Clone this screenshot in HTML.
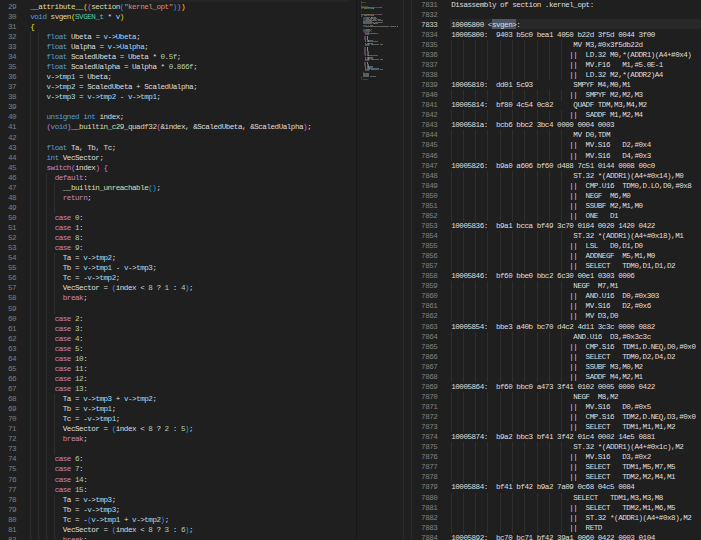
<!DOCTYPE html><html><head><meta charset="utf-8"><style>
*{margin:0;padding:0}
html,body{width:701px;height:540px;overflow:hidden;background:#1f1f1f}
body{position:relative;font-family:"Liberation Mono",monospace;font-size:7.600px;letter-spacing:-0.4850px;line-height:10.058px;color:#dedede}
.l{position:absolute;white-space:pre;height:10.058px}
.n{position:absolute;white-space:pre;text-align:right;width:40px;color:#808080;height:10.058px}
.g{position:absolute;width:1px;background:#2f2f2f}
i{font-style:normal}
.fn{color:#dcdcaa} .kw{color:#569cd6} .ctl{color:#c586c0} .ty{color:#4ec9b0} .var{color:#9cdcfe} .loc{color:#dedede}
.str{color:#ce9178} .num{color:#b5cea8} .b1{color:#ffd700} .b2{color:#da70d6} .b3{color:#179fff}
</style></head><body>
<div class="n" style="left:-23.80px;top:1.77px">29</div>
<div class="l" style="left:30.20px;top:1.77px"><i class="fn">__attribute__</i><i class="b1">(</i><i class="b2">(</i><i class="fn">section</i><i class="b3">(</i><i class="str">&quot;kernel_opt&quot;</i><i class="b3">)</i><i class="b2">)</i><i class="b1">)</i></div>
<div class="n" style="left:-23.80px;top:11.83px">30</div>
<div class="l" style="left:30.20px;top:11.83px"><i class="kw">void</i> <i class="fn">svgen</i><i class="b1">(</i><i class="ty">SVGEN_t</i> * <i class="var">v</i><i class="b1">)</i></div>
<div class="n" style="left:-23.80px;top:21.89px">31</div>
<div class="l" style="left:30.20px;top:21.89px"><i class="b1">{</i></div>
<div class="n" style="left:-23.80px;top:31.95px">32</div>
<div class="g" style="left:30px;top:31.95px;height:10.36px"></div>
<div class="g" style="left:38px;top:31.95px;height:10.36px"></div>
<div class="l" style="left:30.20px;top:31.95px">    <i class="kw">float</i> <i class="loc">Ubeta</i> = <i class="var">v</i>-&gt;<i class="var">Ubeta</i>;</div>
<div class="n" style="left:-23.80px;top:42.00px">33</div>
<div class="g" style="left:30px;top:42.00px;height:10.36px"></div>
<div class="g" style="left:38px;top:42.00px;height:10.36px"></div>
<div class="l" style="left:30.20px;top:42.00px">    <i class="kw">float</i> <i class="loc">Ualpha</i> = <i class="var">v</i>-&gt;<i class="var">Ualpha</i>;</div>
<div class="n" style="left:-23.80px;top:52.06px">34</div>
<div class="g" style="left:30px;top:52.06px;height:10.36px"></div>
<div class="g" style="left:38px;top:52.06px;height:10.36px"></div>
<div class="l" style="left:30.20px;top:52.06px">    <i class="kw">float</i> <i class="loc">ScaledUbeta</i> = <i class="loc">Ubeta</i> * <i class="num">0.5f</i>;</div>
<div class="n" style="left:-23.80px;top:62.12px">35</div>
<div class="g" style="left:30px;top:62.12px;height:10.36px"></div>
<div class="g" style="left:38px;top:62.12px;height:10.36px"></div>
<div class="l" style="left:30.20px;top:62.12px">    <i class="kw">float</i> <i class="loc">ScaledUalpha</i> = <i class="loc">Ualpha</i> * <i class="num">0.866f</i>;</div>
<div class="n" style="left:-23.80px;top:72.18px">36</div>
<div class="g" style="left:30px;top:72.18px;height:10.36px"></div>
<div class="g" style="left:38px;top:72.18px;height:10.36px"></div>
<div class="l" style="left:30.20px;top:72.18px">    <i class="var">v</i>-&gt;<i class="var">tmp1</i> = <i class="loc">Ubeta</i>;</div>
<div class="n" style="left:-23.80px;top:82.23px">37</div>
<div class="g" style="left:30px;top:82.23px;height:10.36px"></div>
<div class="g" style="left:38px;top:82.23px;height:10.36px"></div>
<div class="l" style="left:30.20px;top:82.23px">    <i class="var">v</i>-&gt;<i class="var">tmp2</i> = <i class="loc">ScaledUbeta</i> + <i class="loc">ScaledUalpha</i>;</div>
<div class="n" style="left:-23.80px;top:92.29px">38</div>
<div class="g" style="left:30px;top:92.29px;height:10.36px"></div>
<div class="g" style="left:38px;top:92.29px;height:10.36px"></div>
<div class="l" style="left:30.20px;top:92.29px">    <i class="var">v</i>-&gt;<i class="var">tmp3</i> = <i class="var">v</i>-&gt;<i class="var">tmp2</i> - <i class="var">v</i>-&gt;<i class="var">tmp1</i>;</div>
<div class="n" style="left:-23.80px;top:102.35px">39</div>
<div class="g" style="left:30px;top:102.35px;height:10.36px"></div>
<div class="g" style="left:38px;top:102.35px;height:10.36px"></div>
<div class="n" style="left:-23.80px;top:112.41px">40</div>
<div class="g" style="left:30px;top:112.41px;height:10.36px"></div>
<div class="g" style="left:38px;top:112.41px;height:10.36px"></div>
<div class="l" style="left:30.20px;top:112.41px">    <i class="kw">unsigned</i> <i class="kw">int</i> <i class="loc">index</i>;</div>
<div class="n" style="left:-23.80px;top:122.47px">41</div>
<div class="g" style="left:30px;top:122.47px;height:10.36px"></div>
<div class="g" style="left:38px;top:122.47px;height:10.36px"></div>
<div class="l" style="left:30.20px;top:122.47px">    <i class="b2">(</i><i class="kw">void</i><i class="b2">)</i><i class="fn">__builtin_c29_quadf32</i><i class="b2">(</i>&amp;<i class="loc">index</i>, &amp;<i class="loc">ScaledUbeta</i>, &amp;<i class="loc">ScaledUalpha</i><i class="b2">)</i>;</div>
<div class="n" style="left:-23.80px;top:132.52px">42</div>
<div class="g" style="left:30px;top:132.52px;height:10.36px"></div>
<div class="g" style="left:38px;top:132.52px;height:10.36px"></div>
<div class="n" style="left:-23.80px;top:142.58px">43</div>
<div class="g" style="left:30px;top:142.58px;height:10.36px"></div>
<div class="g" style="left:38px;top:142.58px;height:10.36px"></div>
<div class="l" style="left:30.20px;top:142.58px">    <i class="kw">float</i> <i class="loc">Ta</i>, <i class="loc">Tb</i>, <i class="loc">Tc</i>;</div>
<div class="n" style="left:-23.80px;top:152.64px">44</div>
<div class="g" style="left:30px;top:152.64px;height:10.36px"></div>
<div class="g" style="left:38px;top:152.64px;height:10.36px"></div>
<div class="l" style="left:30.20px;top:152.64px">    <i class="kw">int</i> <i class="loc">VecSector</i>;</div>
<div class="n" style="left:-23.80px;top:162.70px">45</div>
<div class="g" style="left:30px;top:162.70px;height:10.36px"></div>
<div class="g" style="left:38px;top:162.70px;height:10.36px"></div>
<div class="l" style="left:30.20px;top:162.70px">    <i class="ctl">switch</i><i class="b2">(</i><i class="loc">index</i><i class="b2">)</i> <i class="b2">{</i></div>
<div class="n" style="left:-23.80px;top:172.76px">46</div>
<div class="g" style="left:30px;top:172.76px;height:10.36px"></div>
<div class="g" style="left:38px;top:172.76px;height:10.36px"></div>
<div class="g" style="left:46px;top:172.76px;height:10.36px"></div>
<div class="l" style="left:30.20px;top:172.76px">      <i class="ctl">default</i>:</div>
<div class="n" style="left:-23.80px;top:182.81px">47</div>
<div class="g" style="left:30px;top:182.81px;height:10.36px"></div>
<div class="g" style="left:38px;top:182.81px;height:10.36px"></div>
<div class="g" style="left:46px;top:182.81px;height:10.36px"></div>
<div class="g" style="left:54px;top:182.81px;height:10.36px"></div>
<div class="l" style="left:30.20px;top:182.81px">        <i class="fn">__builtin_unreachable</i><i class="b3">()</i>;</div>
<div class="n" style="left:-23.80px;top:192.87px">48</div>
<div class="g" style="left:30px;top:192.87px;height:10.36px"></div>
<div class="g" style="left:38px;top:192.87px;height:10.36px"></div>
<div class="g" style="left:46px;top:192.87px;height:10.36px"></div>
<div class="g" style="left:54px;top:192.87px;height:10.36px"></div>
<div class="l" style="left:30.20px;top:192.87px">        <i class="ctl">return</i>;</div>
<div class="n" style="left:-23.80px;top:202.93px">49</div>
<div class="g" style="left:30px;top:202.93px;height:10.36px"></div>
<div class="g" style="left:38px;top:202.93px;height:10.36px"></div>
<div class="g" style="left:46px;top:202.93px;height:10.36px"></div>
<div class="g" style="left:54px;top:202.93px;height:10.36px"></div>
<div class="n" style="left:-23.80px;top:212.99px">50</div>
<div class="g" style="left:30px;top:212.99px;height:10.36px"></div>
<div class="g" style="left:38px;top:212.99px;height:10.36px"></div>
<div class="g" style="left:46px;top:212.99px;height:10.36px"></div>
<div class="l" style="left:30.20px;top:212.99px">      <i class="ctl">case</i> <i class="num">0</i>:</div>
<div class="n" style="left:-23.80px;top:223.05px">51</div>
<div class="g" style="left:30px;top:223.05px;height:10.36px"></div>
<div class="g" style="left:38px;top:223.05px;height:10.36px"></div>
<div class="g" style="left:46px;top:223.05px;height:10.36px"></div>
<div class="l" style="left:30.20px;top:223.05px">      <i class="ctl">case</i> <i class="num">1</i>:</div>
<div class="n" style="left:-23.80px;top:233.10px">52</div>
<div class="g" style="left:30px;top:233.10px;height:10.36px"></div>
<div class="g" style="left:38px;top:233.10px;height:10.36px"></div>
<div class="g" style="left:46px;top:233.10px;height:10.36px"></div>
<div class="l" style="left:30.20px;top:233.10px">      <i class="ctl">case</i> <i class="num">8</i>:</div>
<div class="n" style="left:-23.80px;top:243.16px">53</div>
<div class="g" style="left:30px;top:243.16px;height:10.36px"></div>
<div class="g" style="left:38px;top:243.16px;height:10.36px"></div>
<div class="g" style="left:46px;top:243.16px;height:10.36px"></div>
<div class="l" style="left:30.20px;top:243.16px">      <i class="ctl">case</i> <i class="num">9</i>:</div>
<div class="n" style="left:-23.80px;top:253.22px">54</div>
<div class="g" style="left:30px;top:253.22px;height:10.36px"></div>
<div class="g" style="left:38px;top:253.22px;height:10.36px"></div>
<div class="g" style="left:46px;top:253.22px;height:10.36px"></div>
<div class="g" style="left:54px;top:253.22px;height:10.36px"></div>
<div class="l" style="left:30.20px;top:253.22px">        <i class="loc">Ta</i> = <i class="var">v</i>-&gt;<i class="var">tmp2</i>;</div>
<div class="n" style="left:-23.80px;top:263.28px">55</div>
<div class="g" style="left:30px;top:263.28px;height:10.36px"></div>
<div class="g" style="left:38px;top:263.28px;height:10.36px"></div>
<div class="g" style="left:46px;top:263.28px;height:10.36px"></div>
<div class="g" style="left:54px;top:263.28px;height:10.36px"></div>
<div class="l" style="left:30.20px;top:263.28px">        <i class="loc">Tb</i> = <i class="var">v</i>-&gt;<i class="var">tmp1</i> - <i class="var">v</i>-&gt;<i class="var">tmp3</i>;</div>
<div class="n" style="left:-23.80px;top:273.34px">56</div>
<div class="g" style="left:30px;top:273.34px;height:10.36px"></div>
<div class="g" style="left:38px;top:273.34px;height:10.36px"></div>
<div class="g" style="left:46px;top:273.34px;height:10.36px"></div>
<div class="g" style="left:54px;top:273.34px;height:10.36px"></div>
<div class="l" style="left:30.20px;top:273.34px">        <i class="loc">Tc</i> = -<i class="var">v</i>-&gt;<i class="var">tmp2</i>;</div>
<div class="n" style="left:-23.80px;top:283.40px">57</div>
<div class="g" style="left:30px;top:283.40px;height:10.36px"></div>
<div class="g" style="left:38px;top:283.40px;height:10.36px"></div>
<div class="g" style="left:46px;top:283.40px;height:10.36px"></div>
<div class="g" style="left:54px;top:283.40px;height:10.36px"></div>
<div class="l" style="left:30.20px;top:283.40px">        <i class="loc">VecSector</i> = <i class="b3">(</i><i class="loc">index</i> &lt; <i class="num">8</i> ? <i class="num">1</i> : <i class="num">4</i><i class="b3">)</i>;</div>
<div class="n" style="left:-23.80px;top:293.45px">58</div>
<div class="g" style="left:30px;top:293.45px;height:10.36px"></div>
<div class="g" style="left:38px;top:293.45px;height:10.36px"></div>
<div class="g" style="left:46px;top:293.45px;height:10.36px"></div>
<div class="g" style="left:54px;top:293.45px;height:10.36px"></div>
<div class="l" style="left:30.20px;top:293.45px">        <i class="ctl">break</i>;</div>
<div class="n" style="left:-23.80px;top:303.51px">59</div>
<div class="g" style="left:30px;top:303.51px;height:10.36px"></div>
<div class="g" style="left:38px;top:303.51px;height:10.36px"></div>
<div class="g" style="left:46px;top:303.51px;height:10.36px"></div>
<div class="g" style="left:54px;top:303.51px;height:10.36px"></div>
<div class="n" style="left:-23.80px;top:313.57px">60</div>
<div class="g" style="left:30px;top:313.57px;height:10.36px"></div>
<div class="g" style="left:38px;top:313.57px;height:10.36px"></div>
<div class="g" style="left:46px;top:313.57px;height:10.36px"></div>
<div class="l" style="left:30.20px;top:313.57px">      <i class="ctl">case</i> <i class="num">2</i>:</div>
<div class="n" style="left:-23.80px;top:323.63px">61</div>
<div class="g" style="left:30px;top:323.63px;height:10.36px"></div>
<div class="g" style="left:38px;top:323.63px;height:10.36px"></div>
<div class="g" style="left:46px;top:323.63px;height:10.36px"></div>
<div class="l" style="left:30.20px;top:323.63px">      <i class="ctl">case</i> <i class="num">3</i>:</div>
<div class="n" style="left:-23.80px;top:333.69px">62</div>
<div class="g" style="left:30px;top:333.69px;height:10.36px"></div>
<div class="g" style="left:38px;top:333.69px;height:10.36px"></div>
<div class="g" style="left:46px;top:333.69px;height:10.36px"></div>
<div class="l" style="left:30.20px;top:333.69px">      <i class="ctl">case</i> <i class="num">4</i>:</div>
<div class="n" style="left:-23.80px;top:343.74px">63</div>
<div class="g" style="left:30px;top:343.74px;height:10.36px"></div>
<div class="g" style="left:38px;top:343.74px;height:10.36px"></div>
<div class="g" style="left:46px;top:343.74px;height:10.36px"></div>
<div class="l" style="left:30.20px;top:343.74px">      <i class="ctl">case</i> <i class="num">5</i>:</div>
<div class="n" style="left:-23.80px;top:353.80px">64</div>
<div class="g" style="left:30px;top:353.80px;height:10.36px"></div>
<div class="g" style="left:38px;top:353.80px;height:10.36px"></div>
<div class="g" style="left:46px;top:353.80px;height:10.36px"></div>
<div class="l" style="left:30.20px;top:353.80px">      <i class="ctl">case</i> <i class="num">10</i>:</div>
<div class="n" style="left:-23.80px;top:363.86px">65</div>
<div class="g" style="left:30px;top:363.86px;height:10.36px"></div>
<div class="g" style="left:38px;top:363.86px;height:10.36px"></div>
<div class="g" style="left:46px;top:363.86px;height:10.36px"></div>
<div class="l" style="left:30.20px;top:363.86px">      <i class="ctl">case</i> <i class="num">11</i>:</div>
<div class="n" style="left:-23.80px;top:373.92px">66</div>
<div class="g" style="left:30px;top:373.92px;height:10.36px"></div>
<div class="g" style="left:38px;top:373.92px;height:10.36px"></div>
<div class="g" style="left:46px;top:373.92px;height:10.36px"></div>
<div class="l" style="left:30.20px;top:373.92px">      <i class="ctl">case</i> <i class="num">12</i>:</div>
<div class="n" style="left:-23.80px;top:383.98px">67</div>
<div class="g" style="left:30px;top:383.98px;height:10.36px"></div>
<div class="g" style="left:38px;top:383.98px;height:10.36px"></div>
<div class="g" style="left:46px;top:383.98px;height:10.36px"></div>
<div class="l" style="left:30.20px;top:383.98px">      <i class="ctl">case</i> <i class="num">13</i>:</div>
<div class="n" style="left:-23.80px;top:394.03px">68</div>
<div class="g" style="left:30px;top:394.03px;height:10.36px"></div>
<div class="g" style="left:38px;top:394.03px;height:10.36px"></div>
<div class="g" style="left:46px;top:394.03px;height:10.36px"></div>
<div class="g" style="left:54px;top:394.03px;height:10.36px"></div>
<div class="l" style="left:30.20px;top:394.03px">        <i class="loc">Ta</i> = <i class="var">v</i>-&gt;<i class="var">tmp3</i> + <i class="var">v</i>-&gt;<i class="var">tmp2</i>;</div>
<div class="n" style="left:-23.80px;top:404.09px">69</div>
<div class="g" style="left:30px;top:404.09px;height:10.36px"></div>
<div class="g" style="left:38px;top:404.09px;height:10.36px"></div>
<div class="g" style="left:46px;top:404.09px;height:10.36px"></div>
<div class="g" style="left:54px;top:404.09px;height:10.36px"></div>
<div class="l" style="left:30.20px;top:404.09px">        <i class="loc">Tb</i> = <i class="var">v</i>-&gt;<i class="var">tmp1</i>;</div>
<div class="n" style="left:-23.80px;top:414.15px">70</div>
<div class="g" style="left:30px;top:414.15px;height:10.36px"></div>
<div class="g" style="left:38px;top:414.15px;height:10.36px"></div>
<div class="g" style="left:46px;top:414.15px;height:10.36px"></div>
<div class="g" style="left:54px;top:414.15px;height:10.36px"></div>
<div class="l" style="left:30.20px;top:414.15px">        <i class="loc">Tc</i> = -<i class="var">v</i>-&gt;<i class="var">tmp1</i>;</div>
<div class="n" style="left:-23.80px;top:424.21px">71</div>
<div class="g" style="left:30px;top:424.21px;height:10.36px"></div>
<div class="g" style="left:38px;top:424.21px;height:10.36px"></div>
<div class="g" style="left:46px;top:424.21px;height:10.36px"></div>
<div class="g" style="left:54px;top:424.21px;height:10.36px"></div>
<div class="l" style="left:30.20px;top:424.21px">        <i class="loc">VecSector</i> = <i class="b3">(</i><i class="loc">index</i> &lt; <i class="num">8</i> ? <i class="num">2</i> : <i class="num">5</i><i class="b3">)</i>;</div>
<div class="n" style="left:-23.80px;top:434.26px">72</div>
<div class="g" style="left:30px;top:434.26px;height:10.36px"></div>
<div class="g" style="left:38px;top:434.26px;height:10.36px"></div>
<div class="g" style="left:46px;top:434.26px;height:10.36px"></div>
<div class="g" style="left:54px;top:434.26px;height:10.36px"></div>
<div class="l" style="left:30.20px;top:434.26px">        <i class="ctl">break</i>;</div>
<div class="n" style="left:-23.80px;top:444.32px">73</div>
<div class="g" style="left:30px;top:444.32px;height:10.36px"></div>
<div class="g" style="left:38px;top:444.32px;height:10.36px"></div>
<div class="g" style="left:46px;top:444.32px;height:10.36px"></div>
<div class="g" style="left:54px;top:444.32px;height:10.36px"></div>
<div class="n" style="left:-23.80px;top:454.38px">74</div>
<div class="g" style="left:30px;top:454.38px;height:10.36px"></div>
<div class="g" style="left:38px;top:454.38px;height:10.36px"></div>
<div class="g" style="left:46px;top:454.38px;height:10.36px"></div>
<div class="l" style="left:30.20px;top:454.38px">      <i class="ctl">case</i> <i class="num">6</i>:</div>
<div class="n" style="left:-23.80px;top:464.44px">75</div>
<div class="g" style="left:30px;top:464.44px;height:10.36px"></div>
<div class="g" style="left:38px;top:464.44px;height:10.36px"></div>
<div class="g" style="left:46px;top:464.44px;height:10.36px"></div>
<div class="l" style="left:30.20px;top:464.44px">      <i class="ctl">case</i> <i class="num">7</i>:</div>
<div class="n" style="left:-23.80px;top:474.50px">76</div>
<div class="g" style="left:30px;top:474.50px;height:10.36px"></div>
<div class="g" style="left:38px;top:474.50px;height:10.36px"></div>
<div class="g" style="left:46px;top:474.50px;height:10.36px"></div>
<div class="l" style="left:30.20px;top:474.50px">      <i class="ctl">case</i> <i class="num">14</i>:</div>
<div class="n" style="left:-23.80px;top:484.56px">77</div>
<div class="g" style="left:30px;top:484.56px;height:10.36px"></div>
<div class="g" style="left:38px;top:484.56px;height:10.36px"></div>
<div class="g" style="left:46px;top:484.56px;height:10.36px"></div>
<div class="l" style="left:30.20px;top:484.56px">      <i class="ctl">case</i> <i class="num">15</i>:</div>
<div class="n" style="left:-23.80px;top:494.61px">78</div>
<div class="g" style="left:30px;top:494.61px;height:10.36px"></div>
<div class="g" style="left:38px;top:494.61px;height:10.36px"></div>
<div class="g" style="left:46px;top:494.61px;height:10.36px"></div>
<div class="g" style="left:54px;top:494.61px;height:10.36px"></div>
<div class="l" style="left:30.20px;top:494.61px">        <i class="loc">Ta</i> = <i class="var">v</i>-&gt;<i class="var">tmp3</i>;</div>
<div class="n" style="left:-23.80px;top:504.67px">79</div>
<div class="g" style="left:30px;top:504.67px;height:10.36px"></div>
<div class="g" style="left:38px;top:504.67px;height:10.36px"></div>
<div class="g" style="left:46px;top:504.67px;height:10.36px"></div>
<div class="g" style="left:54px;top:504.67px;height:10.36px"></div>
<div class="l" style="left:30.20px;top:504.67px">        <i class="loc">Tb</i> = -<i class="var">v</i>-&gt;<i class="var">tmp3</i>;</div>
<div class="n" style="left:-23.80px;top:514.73px">80</div>
<div class="g" style="left:30px;top:514.73px;height:10.36px"></div>
<div class="g" style="left:38px;top:514.73px;height:10.36px"></div>
<div class="g" style="left:46px;top:514.73px;height:10.36px"></div>
<div class="g" style="left:54px;top:514.73px;height:10.36px"></div>
<div class="l" style="left:30.20px;top:514.73px">        <i class="loc">Tc</i> = -<i class="b3">(</i><i class="var">v</i>-&gt;<i class="var">tmp1</i> + <i class="var">v</i>-&gt;<i class="var">tmp2</i><i class="b3">)</i>;</div>
<div class="n" style="left:-23.80px;top:524.79px">81</div>
<div class="g" style="left:30px;top:524.79px;height:10.36px"></div>
<div class="g" style="left:38px;top:524.79px;height:10.36px"></div>
<div class="g" style="left:46px;top:524.79px;height:10.36px"></div>
<div class="g" style="left:54px;top:524.79px;height:10.36px"></div>
<div class="l" style="left:30.20px;top:524.79px">        <i class="loc">VecSector</i> = <i class="b3">(</i><i class="loc">index</i> &lt; <i class="num">8</i> ? <i class="num">3</i> : <i class="num">6</i><i class="b3">)</i>;</div>
<div class="n" style="left:-23.80px;top:534.84px">82</div>
<div class="g" style="left:30px;top:534.84px;height:10.36px"></div>
<div class="g" style="left:38px;top:534.84px;height:10.36px"></div>
<div class="g" style="left:46px;top:534.84px;height:10.36px"></div>
<div class="g" style="left:54px;top:534.84px;height:10.36px"></div>
<div class="l" style="left:30.20px;top:534.84px">        <i class="ctl">break</i>;</div>
<div class="n" style="left:-23.80px;top:544.90px">83</div>
<div class="g" style="left:30px;top:544.90px;height:10.36px"></div>
<div class="g" style="left:38px;top:544.90px;height:10.36px"></div>
<div class="g" style="left:46px;top:544.90px;height:10.36px"></div>
<div class="g" style="left:54px;top:544.90px;height:10.36px"></div>
<div style="position:absolute;left:361.00px;top:0.60px;width:0.53px;height:0.85px;background:#6a9955;opacity:.35"></div>
<div style="position:absolute;left:361.00px;top:1.68px;width:0.53px;height:0.85px;background:#6a9955;opacity:.35"></div>
<div style="position:absolute;left:362.06px;top:1.68px;width:4.24px;height:0.85px;background:#6a9955;opacity:.35"></div>
<div style="position:absolute;left:361.00px;top:2.75px;width:0.53px;height:0.85px;background:#6a9955;opacity:.35"></div>
<div style="position:absolute;left:361.00px;top:4.90px;width:0.53px;height:0.85px;background:#6a9955;opacity:.35"></div>
<div style="position:absolute;left:361.00px;top:5.98px;width:0.53px;height:0.85px;background:#6a9955;opacity:.35"></div>
<div style="position:absolute;left:362.06px;top:5.98px;width:5.83px;height:0.85px;background:#6a9955;opacity:.35"></div>
<div style="position:absolute;left:361.00px;top:7.05px;width:6.89px;height:0.85px;background:#dcdcaa;opacity:.35"></div>
<div style="position:absolute;left:367.89px;top:7.05px;width:0.53px;height:0.85px;background:#ffd700;opacity:.35"></div>
<div style="position:absolute;left:368.42px;top:7.05px;width:0.53px;height:0.85px;background:#da70d6;opacity:.35"></div>
<div style="position:absolute;left:368.95px;top:7.05px;width:3.71px;height:0.85px;background:#dcdcaa;opacity:.35"></div>
<div style="position:absolute;left:372.66px;top:7.05px;width:0.53px;height:0.85px;background:#179fff;opacity:.35"></div>
<div style="position:absolute;left:373.19px;top:7.05px;width:6.36px;height:0.85px;background:#ce9178;opacity:.35"></div>
<div style="position:absolute;left:379.55px;top:7.05px;width:0.53px;height:0.85px;background:#179fff;opacity:.35"></div>
<div style="position:absolute;left:380.08px;top:7.05px;width:0.53px;height:0.85px;background:#da70d6;opacity:.35"></div>
<div style="position:absolute;left:380.61px;top:7.05px;width:0.53px;height:0.85px;background:#ffd700;opacity:.35"></div>
<div style="position:absolute;left:361.00px;top:8.12px;width:2.12px;height:0.85px;background:#569cd6;opacity:.35"></div>
<div style="position:absolute;left:363.65px;top:8.12px;width:2.65px;height:0.85px;background:#dcdcaa;opacity:.35"></div>
<div style="position:absolute;left:366.30px;top:8.12px;width:0.53px;height:0.85px;background:#ffd700;opacity:.35"></div>
<div style="position:absolute;left:366.83px;top:8.12px;width:3.71px;height:0.85px;background:#4ec9b0;opacity:.35"></div>
<div style="position:absolute;left:371.07px;top:8.12px;width:0.53px;height:0.85px;background:#d4d4d4;opacity:.35"></div>
<div style="position:absolute;left:372.13px;top:8.12px;width:0.53px;height:0.85px;background:#9cdcfe;opacity:.35"></div>
<div style="position:absolute;left:372.66px;top:8.12px;width:0.53px;height:0.85px;background:#ffd700;opacity:.35"></div>
<div style="position:absolute;left:373.19px;top:8.12px;width:0.53px;height:0.85px;background:#d4d4d4;opacity:.35"></div>
<div style="position:absolute;left:361.00px;top:11.35px;width:1.06px;height:0.85px;background:#6a9955;opacity:.35"></div>
<div style="position:absolute;left:361.00px;top:13.50px;width:6.89px;height:0.85px;background:#dcdcaa;opacity:.35"></div>
<div style="position:absolute;left:367.89px;top:13.50px;width:0.53px;height:0.85px;background:#ffd700;opacity:.35"></div>
<div style="position:absolute;left:368.42px;top:13.50px;width:0.53px;height:0.85px;background:#da70d6;opacity:.35"></div>
<div style="position:absolute;left:368.95px;top:13.50px;width:3.71px;height:0.85px;background:#dcdcaa;opacity:.35"></div>
<div style="position:absolute;left:372.66px;top:13.50px;width:0.53px;height:0.85px;background:#179fff;opacity:.35"></div>
<div style="position:absolute;left:373.19px;top:13.50px;width:6.36px;height:0.85px;background:#ce9178;opacity:.35"></div>
<div style="position:absolute;left:379.55px;top:13.50px;width:0.53px;height:0.85px;background:#179fff;opacity:.35"></div>
<div style="position:absolute;left:380.08px;top:13.50px;width:0.53px;height:0.85px;background:#da70d6;opacity:.35"></div>
<div style="position:absolute;left:380.61px;top:13.50px;width:0.53px;height:0.85px;background:#ffd700;opacity:.35"></div>
<div style="position:absolute;left:361.00px;top:14.57px;width:2.12px;height:0.85px;background:#569cd6;opacity:.35"></div>
<div style="position:absolute;left:363.65px;top:14.57px;width:2.65px;height:0.85px;background:#dcdcaa;opacity:.35"></div>
<div style="position:absolute;left:366.30px;top:14.57px;width:0.53px;height:0.85px;background:#ffd700;opacity:.35"></div>
<div style="position:absolute;left:366.83px;top:14.57px;width:3.71px;height:0.85px;background:#4ec9b0;opacity:.35"></div>
<div style="position:absolute;left:371.07px;top:14.57px;width:0.53px;height:0.85px;background:#d4d4d4;opacity:.35"></div>
<div style="position:absolute;left:372.13px;top:14.57px;width:0.53px;height:0.85px;background:#9cdcfe;opacity:.35"></div>
<div style="position:absolute;left:372.66px;top:14.57px;width:0.53px;height:0.85px;background:#ffd700;opacity:.35"></div>
<div style="position:absolute;left:361.00px;top:15.65px;width:0.53px;height:0.85px;background:#ffd700;opacity:.35"></div>
<div style="position:absolute;left:363.12px;top:16.73px;width:2.65px;height:0.85px;background:#569cd6;opacity:.35"></div>
<div style="position:absolute;left:366.30px;top:16.73px;width:2.65px;height:0.85px;background:#d4d4d4;opacity:.35"></div>
<div style="position:absolute;left:369.48px;top:16.73px;width:0.53px;height:0.85px;background:#d4d4d4;opacity:.35"></div>
<div style="position:absolute;left:370.54px;top:16.73px;width:0.53px;height:0.85px;background:#9cdcfe;opacity:.35"></div>
<div style="position:absolute;left:371.07px;top:16.73px;width:1.06px;height:0.85px;background:#d4d4d4;opacity:.35"></div>
<div style="position:absolute;left:372.13px;top:16.73px;width:2.65px;height:0.85px;background:#9cdcfe;opacity:.35"></div>
<div style="position:absolute;left:374.78px;top:16.73px;width:0.53px;height:0.85px;background:#d4d4d4;opacity:.35"></div>
<div style="position:absolute;left:363.12px;top:17.80px;width:2.65px;height:0.85px;background:#569cd6;opacity:.35"></div>
<div style="position:absolute;left:366.30px;top:17.80px;width:3.18px;height:0.85px;background:#d4d4d4;opacity:.35"></div>
<div style="position:absolute;left:370.01px;top:17.80px;width:0.53px;height:0.85px;background:#d4d4d4;opacity:.35"></div>
<div style="position:absolute;left:371.07px;top:17.80px;width:0.53px;height:0.85px;background:#9cdcfe;opacity:.35"></div>
<div style="position:absolute;left:371.60px;top:17.80px;width:1.06px;height:0.85px;background:#d4d4d4;opacity:.35"></div>
<div style="position:absolute;left:372.66px;top:17.80px;width:3.18px;height:0.85px;background:#9cdcfe;opacity:.35"></div>
<div style="position:absolute;left:375.84px;top:17.80px;width:0.53px;height:0.85px;background:#d4d4d4;opacity:.35"></div>
<div style="position:absolute;left:363.12px;top:18.88px;width:2.65px;height:0.85px;background:#569cd6;opacity:.35"></div>
<div style="position:absolute;left:366.30px;top:18.88px;width:5.83px;height:0.85px;background:#d4d4d4;opacity:.35"></div>
<div style="position:absolute;left:372.66px;top:18.88px;width:0.53px;height:0.85px;background:#d4d4d4;opacity:.35"></div>
<div style="position:absolute;left:373.72px;top:18.88px;width:2.65px;height:0.85px;background:#d4d4d4;opacity:.35"></div>
<div style="position:absolute;left:376.90px;top:18.88px;width:0.53px;height:0.85px;background:#d4d4d4;opacity:.35"></div>
<div style="position:absolute;left:377.96px;top:18.88px;width:2.12px;height:0.85px;background:#b5cea8;opacity:.35"></div>
<div style="position:absolute;left:380.08px;top:18.88px;width:0.53px;height:0.85px;background:#d4d4d4;opacity:.35"></div>
<div style="position:absolute;left:363.12px;top:19.95px;width:2.65px;height:0.85px;background:#569cd6;opacity:.35"></div>
<div style="position:absolute;left:366.30px;top:19.95px;width:6.36px;height:0.85px;background:#d4d4d4;opacity:.35"></div>
<div style="position:absolute;left:373.19px;top:19.95px;width:0.53px;height:0.85px;background:#d4d4d4;opacity:.35"></div>
<div style="position:absolute;left:374.25px;top:19.95px;width:3.18px;height:0.85px;background:#d4d4d4;opacity:.35"></div>
<div style="position:absolute;left:377.96px;top:19.95px;width:0.53px;height:0.85px;background:#d4d4d4;opacity:.35"></div>
<div style="position:absolute;left:379.02px;top:19.95px;width:3.18px;height:0.85px;background:#b5cea8;opacity:.35"></div>
<div style="position:absolute;left:382.20px;top:19.95px;width:0.53px;height:0.85px;background:#d4d4d4;opacity:.35"></div>
<div style="position:absolute;left:363.12px;top:21.02px;width:0.53px;height:0.85px;background:#9cdcfe;opacity:.35"></div>
<div style="position:absolute;left:363.65px;top:21.02px;width:1.06px;height:0.85px;background:#d4d4d4;opacity:.35"></div>
<div style="position:absolute;left:364.71px;top:21.02px;width:2.12px;height:0.85px;background:#9cdcfe;opacity:.35"></div>
<div style="position:absolute;left:367.36px;top:21.02px;width:0.53px;height:0.85px;background:#d4d4d4;opacity:.35"></div>
<div style="position:absolute;left:368.42px;top:21.02px;width:3.18px;height:0.85px;background:#d4d4d4;opacity:.35"></div>
<div style="position:absolute;left:363.12px;top:22.10px;width:0.53px;height:0.85px;background:#9cdcfe;opacity:.35"></div>
<div style="position:absolute;left:363.65px;top:22.10px;width:1.06px;height:0.85px;background:#d4d4d4;opacity:.35"></div>
<div style="position:absolute;left:364.71px;top:22.10px;width:2.12px;height:0.85px;background:#9cdcfe;opacity:.35"></div>
<div style="position:absolute;left:367.36px;top:22.10px;width:0.53px;height:0.85px;background:#d4d4d4;opacity:.35"></div>
<div style="position:absolute;left:368.42px;top:22.10px;width:5.83px;height:0.85px;background:#d4d4d4;opacity:.35"></div>
<div style="position:absolute;left:374.78px;top:22.10px;width:0.53px;height:0.85px;background:#d4d4d4;opacity:.35"></div>
<div style="position:absolute;left:375.84px;top:22.10px;width:6.89px;height:0.85px;background:#d4d4d4;opacity:.35"></div>
<div style="position:absolute;left:363.12px;top:23.17px;width:0.53px;height:0.85px;background:#9cdcfe;opacity:.35"></div>
<div style="position:absolute;left:363.65px;top:23.17px;width:1.06px;height:0.85px;background:#d4d4d4;opacity:.35"></div>
<div style="position:absolute;left:364.71px;top:23.17px;width:2.12px;height:0.85px;background:#9cdcfe;opacity:.35"></div>
<div style="position:absolute;left:367.36px;top:23.17px;width:0.53px;height:0.85px;background:#d4d4d4;opacity:.35"></div>
<div style="position:absolute;left:368.42px;top:23.17px;width:0.53px;height:0.85px;background:#9cdcfe;opacity:.35"></div>
<div style="position:absolute;left:368.95px;top:23.17px;width:1.06px;height:0.85px;background:#d4d4d4;opacity:.35"></div>
<div style="position:absolute;left:370.01px;top:23.17px;width:2.12px;height:0.85px;background:#9cdcfe;opacity:.35"></div>
<div style="position:absolute;left:372.66px;top:23.17px;width:0.53px;height:0.85px;background:#d4d4d4;opacity:.35"></div>
<div style="position:absolute;left:373.72px;top:23.17px;width:0.53px;height:0.85px;background:#9cdcfe;opacity:.35"></div>
<div style="position:absolute;left:374.25px;top:23.17px;width:1.06px;height:0.85px;background:#d4d4d4;opacity:.35"></div>
<div style="position:absolute;left:375.31px;top:23.17px;width:2.12px;height:0.85px;background:#9cdcfe;opacity:.35"></div>
<div style="position:absolute;left:377.43px;top:23.17px;width:0.53px;height:0.85px;background:#d4d4d4;opacity:.35"></div>
<div style="position:absolute;left:363.12px;top:25.32px;width:4.24px;height:0.85px;background:#569cd6;opacity:.35"></div>
<div style="position:absolute;left:367.89px;top:25.32px;width:1.59px;height:0.85px;background:#569cd6;opacity:.35"></div>
<div style="position:absolute;left:370.01px;top:25.32px;width:3.18px;height:0.85px;background:#d4d4d4;opacity:.35"></div>
<div style="position:absolute;left:363.12px;top:26.40px;width:0.53px;height:0.85px;background:#da70d6;opacity:.35"></div>
<div style="position:absolute;left:363.65px;top:26.40px;width:2.12px;height:0.85px;background:#569cd6;opacity:.35"></div>
<div style="position:absolute;left:365.77px;top:26.40px;width:0.53px;height:0.85px;background:#da70d6;opacity:.35"></div>
<div style="position:absolute;left:366.30px;top:26.40px;width:11.13px;height:0.85px;background:#dcdcaa;opacity:.35"></div>
<div style="position:absolute;left:377.43px;top:26.40px;width:0.53px;height:0.85px;background:#da70d6;opacity:.35"></div>
<div style="position:absolute;left:377.96px;top:26.40px;width:3.71px;height:0.85px;background:#d4d4d4;opacity:.35"></div>
<div style="position:absolute;left:382.20px;top:26.40px;width:6.89px;height:0.85px;background:#d4d4d4;opacity:.35"></div>
<div style="position:absolute;left:389.62px;top:26.40px;width:6.89px;height:0.85px;background:#d4d4d4;opacity:.35"></div>
<div style="position:absolute;left:396.51px;top:26.40px;width:0.53px;height:0.85px;background:#da70d6;opacity:.35"></div>
<div style="position:absolute;left:397.04px;top:26.40px;width:0.53px;height:0.85px;background:#d4d4d4;opacity:.35"></div>
<div style="position:absolute;left:363.12px;top:28.55px;width:2.65px;height:0.85px;background:#569cd6;opacity:.35"></div>
<div style="position:absolute;left:366.30px;top:28.55px;width:1.59px;height:0.85px;background:#d4d4d4;opacity:.35"></div>
<div style="position:absolute;left:368.42px;top:28.55px;width:1.59px;height:0.85px;background:#d4d4d4;opacity:.35"></div>
<div style="position:absolute;left:370.54px;top:28.55px;width:1.59px;height:0.85px;background:#d4d4d4;opacity:.35"></div>
<div style="position:absolute;left:363.12px;top:29.62px;width:1.59px;height:0.85px;background:#569cd6;opacity:.35"></div>
<div style="position:absolute;left:365.24px;top:29.62px;width:5.30px;height:0.85px;background:#d4d4d4;opacity:.35"></div>
<div style="position:absolute;left:363.12px;top:30.70px;width:3.18px;height:0.85px;background:#c586c0;opacity:.35"></div>
<div style="position:absolute;left:366.30px;top:30.70px;width:0.53px;height:0.85px;background:#da70d6;opacity:.35"></div>
<div style="position:absolute;left:366.83px;top:30.70px;width:2.65px;height:0.85px;background:#d4d4d4;opacity:.35"></div>
<div style="position:absolute;left:369.48px;top:30.70px;width:0.53px;height:0.85px;background:#da70d6;opacity:.35"></div>
<div style="position:absolute;left:370.54px;top:30.70px;width:0.53px;height:0.85px;background:#da70d6;opacity:.35"></div>
<div style="position:absolute;left:364.18px;top:31.77px;width:3.71px;height:0.85px;background:#c586c0;opacity:.35"></div>
<div style="position:absolute;left:367.89px;top:31.77px;width:0.53px;height:0.85px;background:#d4d4d4;opacity:.35"></div>
<div style="position:absolute;left:365.24px;top:32.85px;width:11.13px;height:0.85px;background:#dcdcaa;opacity:.35"></div>
<div style="position:absolute;left:376.37px;top:32.85px;width:1.06px;height:0.85px;background:#179fff;opacity:.35"></div>
<div style="position:absolute;left:377.43px;top:32.85px;width:0.53px;height:0.85px;background:#d4d4d4;opacity:.35"></div>
<div style="position:absolute;left:365.24px;top:33.92px;width:3.18px;height:0.85px;background:#c586c0;opacity:.35"></div>
<div style="position:absolute;left:368.42px;top:33.92px;width:0.53px;height:0.85px;background:#d4d4d4;opacity:.35"></div>
<div style="position:absolute;left:364.18px;top:36.08px;width:2.12px;height:0.85px;background:#c586c0;opacity:.35"></div>
<div style="position:absolute;left:366.83px;top:36.08px;width:0.53px;height:0.85px;background:#b5cea8;opacity:.35"></div>
<div style="position:absolute;left:367.36px;top:36.08px;width:0.53px;height:0.85px;background:#d4d4d4;opacity:.35"></div>
<div style="position:absolute;left:364.18px;top:37.15px;width:2.12px;height:0.85px;background:#c586c0;opacity:.35"></div>
<div style="position:absolute;left:366.83px;top:37.15px;width:0.53px;height:0.85px;background:#b5cea8;opacity:.35"></div>
<div style="position:absolute;left:367.36px;top:37.15px;width:0.53px;height:0.85px;background:#d4d4d4;opacity:.35"></div>
<div style="position:absolute;left:364.18px;top:38.22px;width:2.12px;height:0.85px;background:#c586c0;opacity:.35"></div>
<div style="position:absolute;left:366.83px;top:38.22px;width:0.53px;height:0.85px;background:#b5cea8;opacity:.35"></div>
<div style="position:absolute;left:367.36px;top:38.22px;width:0.53px;height:0.85px;background:#d4d4d4;opacity:.35"></div>
<div style="position:absolute;left:364.18px;top:39.30px;width:2.12px;height:0.85px;background:#c586c0;opacity:.35"></div>
<div style="position:absolute;left:366.83px;top:39.30px;width:0.53px;height:0.85px;background:#b5cea8;opacity:.35"></div>
<div style="position:absolute;left:367.36px;top:39.30px;width:0.53px;height:0.85px;background:#d4d4d4;opacity:.35"></div>
<div style="position:absolute;left:365.24px;top:40.38px;width:1.06px;height:0.85px;background:#d4d4d4;opacity:.35"></div>
<div style="position:absolute;left:366.83px;top:40.38px;width:0.53px;height:0.85px;background:#d4d4d4;opacity:.35"></div>
<div style="position:absolute;left:367.89px;top:40.38px;width:0.53px;height:0.85px;background:#9cdcfe;opacity:.35"></div>
<div style="position:absolute;left:368.42px;top:40.38px;width:1.06px;height:0.85px;background:#d4d4d4;opacity:.35"></div>
<div style="position:absolute;left:369.48px;top:40.38px;width:2.12px;height:0.85px;background:#9cdcfe;opacity:.35"></div>
<div style="position:absolute;left:371.60px;top:40.38px;width:0.53px;height:0.85px;background:#d4d4d4;opacity:.35"></div>
<div style="position:absolute;left:365.24px;top:41.45px;width:1.06px;height:0.85px;background:#d4d4d4;opacity:.35"></div>
<div style="position:absolute;left:366.83px;top:41.45px;width:0.53px;height:0.85px;background:#d4d4d4;opacity:.35"></div>
<div style="position:absolute;left:367.89px;top:41.45px;width:0.53px;height:0.85px;background:#9cdcfe;opacity:.35"></div>
<div style="position:absolute;left:368.42px;top:41.45px;width:1.06px;height:0.85px;background:#d4d4d4;opacity:.35"></div>
<div style="position:absolute;left:369.48px;top:41.45px;width:2.12px;height:0.85px;background:#9cdcfe;opacity:.35"></div>
<div style="position:absolute;left:372.13px;top:41.45px;width:0.53px;height:0.85px;background:#d4d4d4;opacity:.35"></div>
<div style="position:absolute;left:373.19px;top:41.45px;width:0.53px;height:0.85px;background:#9cdcfe;opacity:.35"></div>
<div style="position:absolute;left:373.72px;top:41.45px;width:1.06px;height:0.85px;background:#d4d4d4;opacity:.35"></div>
<div style="position:absolute;left:374.78px;top:41.45px;width:2.12px;height:0.85px;background:#9cdcfe;opacity:.35"></div>
<div style="position:absolute;left:376.90px;top:41.45px;width:0.53px;height:0.85px;background:#d4d4d4;opacity:.35"></div>
<div style="position:absolute;left:365.24px;top:42.52px;width:1.06px;height:0.85px;background:#d4d4d4;opacity:.35"></div>
<div style="position:absolute;left:366.83px;top:42.52px;width:0.53px;height:0.85px;background:#d4d4d4;opacity:.35"></div>
<div style="position:absolute;left:367.89px;top:42.52px;width:0.53px;height:0.85px;background:#d4d4d4;opacity:.35"></div>
<div style="position:absolute;left:368.42px;top:42.52px;width:0.53px;height:0.85px;background:#9cdcfe;opacity:.35"></div>
<div style="position:absolute;left:368.95px;top:42.52px;width:1.06px;height:0.85px;background:#d4d4d4;opacity:.35"></div>
<div style="position:absolute;left:370.01px;top:42.52px;width:2.12px;height:0.85px;background:#9cdcfe;opacity:.35"></div>
<div style="position:absolute;left:372.13px;top:42.52px;width:0.53px;height:0.85px;background:#d4d4d4;opacity:.35"></div>
<div style="position:absolute;left:365.24px;top:43.60px;width:4.77px;height:0.85px;background:#d4d4d4;opacity:.35"></div>
<div style="position:absolute;left:370.54px;top:43.60px;width:0.53px;height:0.85px;background:#d4d4d4;opacity:.35"></div>
<div style="position:absolute;left:371.60px;top:43.60px;width:0.53px;height:0.85px;background:#179fff;opacity:.35"></div>
<div style="position:absolute;left:372.13px;top:43.60px;width:2.65px;height:0.85px;background:#d4d4d4;opacity:.35"></div>
<div style="position:absolute;left:375.31px;top:43.60px;width:0.53px;height:0.85px;background:#d4d4d4;opacity:.35"></div>
<div style="position:absolute;left:376.37px;top:43.60px;width:0.53px;height:0.85px;background:#b5cea8;opacity:.35"></div>
<div style="position:absolute;left:377.43px;top:43.60px;width:0.53px;height:0.85px;background:#d4d4d4;opacity:.35"></div>
<div style="position:absolute;left:378.49px;top:43.60px;width:0.53px;height:0.85px;background:#b5cea8;opacity:.35"></div>
<div style="position:absolute;left:379.55px;top:43.60px;width:0.53px;height:0.85px;background:#d4d4d4;opacity:.35"></div>
<div style="position:absolute;left:380.61px;top:43.60px;width:0.53px;height:0.85px;background:#b5cea8;opacity:.35"></div>
<div style="position:absolute;left:381.14px;top:43.60px;width:0.53px;height:0.85px;background:#179fff;opacity:.35"></div>
<div style="position:absolute;left:381.67px;top:43.60px;width:0.53px;height:0.85px;background:#d4d4d4;opacity:.35"></div>
<div style="position:absolute;left:365.24px;top:44.67px;width:2.65px;height:0.85px;background:#c586c0;opacity:.35"></div>
<div style="position:absolute;left:367.89px;top:44.67px;width:0.53px;height:0.85px;background:#d4d4d4;opacity:.35"></div>
<div style="position:absolute;left:364.18px;top:46.82px;width:2.12px;height:0.85px;background:#c586c0;opacity:.35"></div>
<div style="position:absolute;left:366.83px;top:46.82px;width:0.53px;height:0.85px;background:#b5cea8;opacity:.35"></div>
<div style="position:absolute;left:367.36px;top:46.82px;width:0.53px;height:0.85px;background:#d4d4d4;opacity:.35"></div>
<div style="position:absolute;left:364.18px;top:47.90px;width:2.12px;height:0.85px;background:#c586c0;opacity:.35"></div>
<div style="position:absolute;left:366.83px;top:47.90px;width:0.53px;height:0.85px;background:#b5cea8;opacity:.35"></div>
<div style="position:absolute;left:367.36px;top:47.90px;width:0.53px;height:0.85px;background:#d4d4d4;opacity:.35"></div>
<div style="position:absolute;left:364.18px;top:48.98px;width:2.12px;height:0.85px;background:#c586c0;opacity:.35"></div>
<div style="position:absolute;left:366.83px;top:48.98px;width:0.53px;height:0.85px;background:#b5cea8;opacity:.35"></div>
<div style="position:absolute;left:367.36px;top:48.98px;width:0.53px;height:0.85px;background:#d4d4d4;opacity:.35"></div>
<div style="position:absolute;left:364.18px;top:50.05px;width:2.12px;height:0.85px;background:#c586c0;opacity:.35"></div>
<div style="position:absolute;left:366.83px;top:50.05px;width:0.53px;height:0.85px;background:#b5cea8;opacity:.35"></div>
<div style="position:absolute;left:367.36px;top:50.05px;width:0.53px;height:0.85px;background:#d4d4d4;opacity:.35"></div>
<div style="position:absolute;left:364.18px;top:51.12px;width:2.12px;height:0.85px;background:#c586c0;opacity:.35"></div>
<div style="position:absolute;left:366.83px;top:51.12px;width:1.06px;height:0.85px;background:#b5cea8;opacity:.35"></div>
<div style="position:absolute;left:367.89px;top:51.12px;width:0.53px;height:0.85px;background:#d4d4d4;opacity:.35"></div>
<div style="position:absolute;left:364.18px;top:52.20px;width:2.12px;height:0.85px;background:#c586c0;opacity:.35"></div>
<div style="position:absolute;left:366.83px;top:52.20px;width:1.06px;height:0.85px;background:#b5cea8;opacity:.35"></div>
<div style="position:absolute;left:367.89px;top:52.20px;width:0.53px;height:0.85px;background:#d4d4d4;opacity:.35"></div>
<div style="position:absolute;left:364.18px;top:53.27px;width:2.12px;height:0.85px;background:#c586c0;opacity:.35"></div>
<div style="position:absolute;left:366.83px;top:53.27px;width:1.06px;height:0.85px;background:#b5cea8;opacity:.35"></div>
<div style="position:absolute;left:367.89px;top:53.27px;width:0.53px;height:0.85px;background:#d4d4d4;opacity:.35"></div>
<div style="position:absolute;left:364.18px;top:54.35px;width:2.12px;height:0.85px;background:#c586c0;opacity:.35"></div>
<div style="position:absolute;left:366.83px;top:54.35px;width:1.06px;height:0.85px;background:#b5cea8;opacity:.35"></div>
<div style="position:absolute;left:367.89px;top:54.35px;width:0.53px;height:0.85px;background:#d4d4d4;opacity:.35"></div>
<div style="position:absolute;left:365.24px;top:55.42px;width:1.06px;height:0.85px;background:#d4d4d4;opacity:.35"></div>
<div style="position:absolute;left:366.83px;top:55.42px;width:0.53px;height:0.85px;background:#d4d4d4;opacity:.35"></div>
<div style="position:absolute;left:367.89px;top:55.42px;width:0.53px;height:0.85px;background:#9cdcfe;opacity:.35"></div>
<div style="position:absolute;left:368.42px;top:55.42px;width:1.06px;height:0.85px;background:#d4d4d4;opacity:.35"></div>
<div style="position:absolute;left:369.48px;top:55.42px;width:2.12px;height:0.85px;background:#9cdcfe;opacity:.35"></div>
<div style="position:absolute;left:372.13px;top:55.42px;width:0.53px;height:0.85px;background:#d4d4d4;opacity:.35"></div>
<div style="position:absolute;left:373.19px;top:55.42px;width:0.53px;height:0.85px;background:#9cdcfe;opacity:.35"></div>
<div style="position:absolute;left:373.72px;top:55.42px;width:1.06px;height:0.85px;background:#d4d4d4;opacity:.35"></div>
<div style="position:absolute;left:374.78px;top:55.42px;width:2.12px;height:0.85px;background:#9cdcfe;opacity:.35"></div>
<div style="position:absolute;left:376.90px;top:55.42px;width:0.53px;height:0.85px;background:#d4d4d4;opacity:.35"></div>
<div style="position:absolute;left:365.24px;top:56.50px;width:1.06px;height:0.85px;background:#d4d4d4;opacity:.35"></div>
<div style="position:absolute;left:366.83px;top:56.50px;width:0.53px;height:0.85px;background:#d4d4d4;opacity:.35"></div>
<div style="position:absolute;left:367.89px;top:56.50px;width:0.53px;height:0.85px;background:#9cdcfe;opacity:.35"></div>
<div style="position:absolute;left:368.42px;top:56.50px;width:1.06px;height:0.85px;background:#d4d4d4;opacity:.35"></div>
<div style="position:absolute;left:369.48px;top:56.50px;width:2.12px;height:0.85px;background:#9cdcfe;opacity:.35"></div>
<div style="position:absolute;left:371.60px;top:56.50px;width:0.53px;height:0.85px;background:#d4d4d4;opacity:.35"></div>
<div style="position:absolute;left:365.24px;top:57.57px;width:1.06px;height:0.85px;background:#d4d4d4;opacity:.35"></div>
<div style="position:absolute;left:366.83px;top:57.57px;width:0.53px;height:0.85px;background:#d4d4d4;opacity:.35"></div>
<div style="position:absolute;left:367.89px;top:57.57px;width:0.53px;height:0.85px;background:#d4d4d4;opacity:.35"></div>
<div style="position:absolute;left:368.42px;top:57.57px;width:0.53px;height:0.85px;background:#9cdcfe;opacity:.35"></div>
<div style="position:absolute;left:368.95px;top:57.57px;width:1.06px;height:0.85px;background:#d4d4d4;opacity:.35"></div>
<div style="position:absolute;left:370.01px;top:57.57px;width:2.12px;height:0.85px;background:#9cdcfe;opacity:.35"></div>
<div style="position:absolute;left:372.13px;top:57.57px;width:0.53px;height:0.85px;background:#d4d4d4;opacity:.35"></div>
<div style="position:absolute;left:365.24px;top:58.65px;width:4.77px;height:0.85px;background:#d4d4d4;opacity:.35"></div>
<div style="position:absolute;left:370.54px;top:58.65px;width:0.53px;height:0.85px;background:#d4d4d4;opacity:.35"></div>
<div style="position:absolute;left:371.60px;top:58.65px;width:0.53px;height:0.85px;background:#179fff;opacity:.35"></div>
<div style="position:absolute;left:372.13px;top:58.65px;width:2.65px;height:0.85px;background:#d4d4d4;opacity:.35"></div>
<div style="position:absolute;left:375.31px;top:58.65px;width:0.53px;height:0.85px;background:#d4d4d4;opacity:.35"></div>
<div style="position:absolute;left:376.37px;top:58.65px;width:0.53px;height:0.85px;background:#b5cea8;opacity:.35"></div>
<div style="position:absolute;left:377.43px;top:58.65px;width:0.53px;height:0.85px;background:#d4d4d4;opacity:.35"></div>
<div style="position:absolute;left:378.49px;top:58.65px;width:0.53px;height:0.85px;background:#b5cea8;opacity:.35"></div>
<div style="position:absolute;left:379.55px;top:58.65px;width:0.53px;height:0.85px;background:#d4d4d4;opacity:.35"></div>
<div style="position:absolute;left:380.61px;top:58.65px;width:0.53px;height:0.85px;background:#b5cea8;opacity:.35"></div>
<div style="position:absolute;left:381.14px;top:58.65px;width:0.53px;height:0.85px;background:#179fff;opacity:.35"></div>
<div style="position:absolute;left:381.67px;top:58.65px;width:0.53px;height:0.85px;background:#d4d4d4;opacity:.35"></div>
<div style="position:absolute;left:365.24px;top:59.73px;width:2.65px;height:0.85px;background:#c586c0;opacity:.35"></div>
<div style="position:absolute;left:367.89px;top:59.73px;width:0.53px;height:0.85px;background:#d4d4d4;opacity:.35"></div>
<div style="position:absolute;left:364.18px;top:61.88px;width:2.12px;height:0.85px;background:#c586c0;opacity:.35"></div>
<div style="position:absolute;left:366.83px;top:61.88px;width:0.53px;height:0.85px;background:#b5cea8;opacity:.35"></div>
<div style="position:absolute;left:367.36px;top:61.88px;width:0.53px;height:0.85px;background:#d4d4d4;opacity:.35"></div>
<div style="position:absolute;left:364.18px;top:62.95px;width:2.12px;height:0.85px;background:#c586c0;opacity:.35"></div>
<div style="position:absolute;left:366.83px;top:62.95px;width:0.53px;height:0.85px;background:#b5cea8;opacity:.35"></div>
<div style="position:absolute;left:367.36px;top:62.95px;width:0.53px;height:0.85px;background:#d4d4d4;opacity:.35"></div>
<div style="position:absolute;left:364.18px;top:64.03px;width:2.12px;height:0.85px;background:#c586c0;opacity:.35"></div>
<div style="position:absolute;left:366.83px;top:64.03px;width:1.06px;height:0.85px;background:#b5cea8;opacity:.35"></div>
<div style="position:absolute;left:367.89px;top:64.03px;width:0.53px;height:0.85px;background:#d4d4d4;opacity:.35"></div>
<div style="position:absolute;left:364.18px;top:65.10px;width:2.12px;height:0.85px;background:#c586c0;opacity:.35"></div>
<div style="position:absolute;left:366.83px;top:65.10px;width:1.06px;height:0.85px;background:#b5cea8;opacity:.35"></div>
<div style="position:absolute;left:367.89px;top:65.10px;width:0.53px;height:0.85px;background:#d4d4d4;opacity:.35"></div>
<div style="position:absolute;left:365.24px;top:66.17px;width:1.06px;height:0.85px;background:#d4d4d4;opacity:.35"></div>
<div style="position:absolute;left:366.83px;top:66.17px;width:0.53px;height:0.85px;background:#d4d4d4;opacity:.35"></div>
<div style="position:absolute;left:367.89px;top:66.17px;width:0.53px;height:0.85px;background:#9cdcfe;opacity:.35"></div>
<div style="position:absolute;left:368.42px;top:66.17px;width:1.06px;height:0.85px;background:#d4d4d4;opacity:.35"></div>
<div style="position:absolute;left:369.48px;top:66.17px;width:2.12px;height:0.85px;background:#9cdcfe;opacity:.35"></div>
<div style="position:absolute;left:371.60px;top:66.17px;width:0.53px;height:0.85px;background:#d4d4d4;opacity:.35"></div>
<div style="position:absolute;left:365.24px;top:67.25px;width:1.06px;height:0.85px;background:#d4d4d4;opacity:.35"></div>
<div style="position:absolute;left:366.83px;top:67.25px;width:0.53px;height:0.85px;background:#d4d4d4;opacity:.35"></div>
<div style="position:absolute;left:367.89px;top:67.25px;width:0.53px;height:0.85px;background:#d4d4d4;opacity:.35"></div>
<div style="position:absolute;left:368.42px;top:67.25px;width:0.53px;height:0.85px;background:#9cdcfe;opacity:.35"></div>
<div style="position:absolute;left:368.95px;top:67.25px;width:1.06px;height:0.85px;background:#d4d4d4;opacity:.35"></div>
<div style="position:absolute;left:370.01px;top:67.25px;width:2.12px;height:0.85px;background:#9cdcfe;opacity:.35"></div>
<div style="position:absolute;left:372.13px;top:67.25px;width:0.53px;height:0.85px;background:#d4d4d4;opacity:.35"></div>
<div style="position:absolute;left:365.24px;top:68.32px;width:1.06px;height:0.85px;background:#d4d4d4;opacity:.35"></div>
<div style="position:absolute;left:366.83px;top:68.32px;width:0.53px;height:0.85px;background:#d4d4d4;opacity:.35"></div>
<div style="position:absolute;left:367.89px;top:68.32px;width:0.53px;height:0.85px;background:#d4d4d4;opacity:.35"></div>
<div style="position:absolute;left:368.42px;top:68.32px;width:0.53px;height:0.85px;background:#179fff;opacity:.35"></div>
<div style="position:absolute;left:368.95px;top:68.32px;width:0.53px;height:0.85px;background:#9cdcfe;opacity:.35"></div>
<div style="position:absolute;left:369.48px;top:68.32px;width:1.06px;height:0.85px;background:#d4d4d4;opacity:.35"></div>
<div style="position:absolute;left:370.54px;top:68.32px;width:2.12px;height:0.85px;background:#9cdcfe;opacity:.35"></div>
<div style="position:absolute;left:373.19px;top:68.32px;width:0.53px;height:0.85px;background:#d4d4d4;opacity:.35"></div>
<div style="position:absolute;left:374.25px;top:68.32px;width:0.53px;height:0.85px;background:#9cdcfe;opacity:.35"></div>
<div style="position:absolute;left:374.78px;top:68.32px;width:1.06px;height:0.85px;background:#d4d4d4;opacity:.35"></div>
<div style="position:absolute;left:375.84px;top:68.32px;width:2.12px;height:0.85px;background:#9cdcfe;opacity:.35"></div>
<div style="position:absolute;left:377.96px;top:68.32px;width:0.53px;height:0.85px;background:#179fff;opacity:.35"></div>
<div style="position:absolute;left:378.49px;top:68.32px;width:0.53px;height:0.85px;background:#d4d4d4;opacity:.35"></div>
<div style="position:absolute;left:365.24px;top:69.40px;width:4.77px;height:0.85px;background:#d4d4d4;opacity:.35"></div>
<div style="position:absolute;left:370.54px;top:69.40px;width:0.53px;height:0.85px;background:#d4d4d4;opacity:.35"></div>
<div style="position:absolute;left:371.60px;top:69.40px;width:0.53px;height:0.85px;background:#179fff;opacity:.35"></div>
<div style="position:absolute;left:372.13px;top:69.40px;width:2.65px;height:0.85px;background:#d4d4d4;opacity:.35"></div>
<div style="position:absolute;left:375.31px;top:69.40px;width:0.53px;height:0.85px;background:#d4d4d4;opacity:.35"></div>
<div style="position:absolute;left:376.37px;top:69.40px;width:0.53px;height:0.85px;background:#b5cea8;opacity:.35"></div>
<div style="position:absolute;left:377.43px;top:69.40px;width:0.53px;height:0.85px;background:#d4d4d4;opacity:.35"></div>
<div style="position:absolute;left:378.49px;top:69.40px;width:0.53px;height:0.85px;background:#b5cea8;opacity:.35"></div>
<div style="position:absolute;left:379.55px;top:69.40px;width:0.53px;height:0.85px;background:#d4d4d4;opacity:.35"></div>
<div style="position:absolute;left:380.61px;top:69.40px;width:0.53px;height:0.85px;background:#b5cea8;opacity:.35"></div>
<div style="position:absolute;left:381.14px;top:69.40px;width:0.53px;height:0.85px;background:#179fff;opacity:.35"></div>
<div style="position:absolute;left:381.67px;top:69.40px;width:0.53px;height:0.85px;background:#d4d4d4;opacity:.35"></div>
<div style="position:absolute;left:365.24px;top:70.47px;width:2.65px;height:0.85px;background:#c586c0;opacity:.35"></div>
<div style="position:absolute;left:367.89px;top:70.47px;width:0.53px;height:0.85px;background:#d4d4d4;opacity:.35"></div>
<div style="position:absolute;left:363.12px;top:71.55px;width:0.53px;height:0.85px;background:#da70d6;opacity:.35"></div>
<div style="position:absolute;left:363.12px;top:72.62px;width:0.53px;height:0.85px;background:#9cdcfe;opacity:.35"></div>
<div style="position:absolute;left:363.65px;top:72.62px;width:1.06px;height:0.85px;background:#d4d4d4;opacity:.35"></div>
<div style="position:absolute;left:364.71px;top:72.62px;width:1.06px;height:0.85px;background:#9cdcfe;opacity:.35"></div>
<div style="position:absolute;left:366.30px;top:72.62px;width:0.53px;height:0.85px;background:#d4d4d4;opacity:.35"></div>
<div style="position:absolute;left:367.36px;top:72.62px;width:1.59px;height:0.85px;background:#d4d4d4;opacity:.35"></div>
<div style="position:absolute;left:363.12px;top:73.70px;width:0.53px;height:0.85px;background:#9cdcfe;opacity:.35"></div>
<div style="position:absolute;left:363.65px;top:73.70px;width:1.06px;height:0.85px;background:#d4d4d4;opacity:.35"></div>
<div style="position:absolute;left:364.71px;top:73.70px;width:1.06px;height:0.85px;background:#9cdcfe;opacity:.35"></div>
<div style="position:absolute;left:366.30px;top:73.70px;width:0.53px;height:0.85px;background:#d4d4d4;opacity:.35"></div>
<div style="position:absolute;left:367.36px;top:73.70px;width:1.59px;height:0.85px;background:#d4d4d4;opacity:.35"></div>
<div style="position:absolute;left:363.12px;top:74.78px;width:0.53px;height:0.85px;background:#9cdcfe;opacity:.35"></div>
<div style="position:absolute;left:363.65px;top:74.78px;width:1.06px;height:0.85px;background:#d4d4d4;opacity:.35"></div>
<div style="position:absolute;left:364.71px;top:74.78px;width:1.06px;height:0.85px;background:#9cdcfe;opacity:.35"></div>
<div style="position:absolute;left:366.30px;top:74.78px;width:0.53px;height:0.85px;background:#d4d4d4;opacity:.35"></div>
<div style="position:absolute;left:367.36px;top:74.78px;width:1.59px;height:0.85px;background:#d4d4d4;opacity:.35"></div>
<div style="position:absolute;left:363.12px;top:75.85px;width:0.53px;height:0.85px;background:#9cdcfe;opacity:.35"></div>
<div style="position:absolute;left:363.65px;top:75.85px;width:1.06px;height:0.85px;background:#d4d4d4;opacity:.35"></div>
<div style="position:absolute;left:364.71px;top:75.85px;width:4.77px;height:0.85px;background:#9cdcfe;opacity:.35"></div>
<div style="position:absolute;left:370.01px;top:75.85px;width:0.53px;height:0.85px;background:#d4d4d4;opacity:.35"></div>
<div style="position:absolute;left:371.07px;top:75.85px;width:5.30px;height:0.85px;background:#d4d4d4;opacity:.35"></div>
<div style="position:absolute;left:361.00px;top:76.92px;width:0.53px;height:0.85px;background:#ffd700;opacity:.35"></div>
<div style="position:absolute;left:361.00px;top:79.08px;width:1.06px;height:0.85px;background:#6a9955;opacity:.35"></div>
<div style="position:absolute;left:362.59px;top:79.08px;width:5.30px;height:0.85px;background:#6a9955;opacity:.35"></div>
<div style="position:absolute;left:356px;top:0;width:1px;height:540px;background:#161616"></div>
<div style="position:absolute;left:403px;top:0;width:1px;height:540px;background:#2b2b2b"></div>
<div style="position:absolute;left:410.6px;top:0;width:1.4px;height:540px;background:#2b2b2b"></div>
<div style="position:absolute;left:128px;top:0;width:221px;height:1.7px;background:#252525"></div>
<div class="n" style="left:397.40px;top:-0.33px;color:#808080">7831</div>
<div class="l" style="left:451.20px;top:-0.33px">Disassembly of section .kernel_opt:</div>
<div class="n" style="left:397.40px;top:9.73px;color:#808080">7832</div>
<div class="n" style="left:397.40px;top:19.79px;color:#cccccc">7833</div>
<div style="position:absolute;left:450.40px;top:18.9px;width:250.80px;height:10px;background:#282828"></div>
<div style="position:absolute;left:491.95px;top:18.9px;width:24.45px;height:10.1px;background:#4a5565"></div>
<div class="l" style="left:451.20px;top:19.79px">10005800 &lt;svgen&gt;:</div>
<div class="n" style="left:397.40px;top:29.84px;color:#808080">7834</div>
<div class="l" style="left:451.20px;top:29.84px">10005800:  9403 b5c0 bea1 4050 b22d 3f5d 0044 3f00</div>
<div class="n" style="left:397.40px;top:39.90px;color:#808080">7835</div>
<div class="g" style="left:451px;top:39.90px;height:10.36px"></div>
<div class="g" style="left:463px;top:39.90px;height:10.36px"></div>
<div class="g" style="left:475px;top:39.90px;height:10.36px"></div>
<div class="g" style="left:487px;top:39.90px;height:10.36px"></div>
<div class="g" style="left:500px;top:39.90px;height:10.36px"></div>
<div class="g" style="left:512px;top:39.90px;height:10.36px"></div>
<div class="g" style="left:524px;top:39.90px;height:10.36px"></div>
<div class="g" style="left:537px;top:39.90px;height:10.36px"></div>
<div class="g" style="left:549px;top:39.90px;height:10.36px"></div>
<div class="g" style="left:561px;top:39.90px;height:10.36px"></div>
<div class="l" style="left:451.20px;top:39.90px">                              MV M3,#0x3f5db22d</div>
<div class="n" style="left:397.40px;top:49.96px;color:#808080">7836</div>
<div class="g" style="left:451px;top:49.96px;height:10.36px"></div>
<div class="g" style="left:463px;top:49.96px;height:10.36px"></div>
<div class="g" style="left:475px;top:49.96px;height:10.36px"></div>
<div class="g" style="left:487px;top:49.96px;height:10.36px"></div>
<div class="g" style="left:500px;top:49.96px;height:10.36px"></div>
<div class="g" style="left:512px;top:49.96px;height:10.36px"></div>
<div class="g" style="left:524px;top:49.96px;height:10.36px"></div>
<div class="g" style="left:537px;top:49.96px;height:10.36px"></div>
<div class="g" style="left:549px;top:49.96px;height:10.36px"></div>
<div class="g" style="left:561px;top:49.96px;height:10.36px"></div>
<div class="l" style="left:451.20px;top:49.96px">                             ||  LD.32 M0,*(ADDR1)(A4+#0x4)</div>
<div class="n" style="left:397.40px;top:60.02px;color:#808080">7837</div>
<div class="g" style="left:451px;top:60.02px;height:10.36px"></div>
<div class="g" style="left:463px;top:60.02px;height:10.36px"></div>
<div class="g" style="left:475px;top:60.02px;height:10.36px"></div>
<div class="g" style="left:487px;top:60.02px;height:10.36px"></div>
<div class="g" style="left:500px;top:60.02px;height:10.36px"></div>
<div class="g" style="left:512px;top:60.02px;height:10.36px"></div>
<div class="g" style="left:524px;top:60.02px;height:10.36px"></div>
<div class="g" style="left:537px;top:60.02px;height:10.36px"></div>
<div class="g" style="left:549px;top:60.02px;height:10.36px"></div>
<div class="g" style="left:561px;top:60.02px;height:10.36px"></div>
<div class="l" style="left:451.20px;top:60.02px">                             ||  MV.F16   M1,#5.0E-1</div>
<div class="n" style="left:397.40px;top:70.08px;color:#808080">7838</div>
<div class="g" style="left:451px;top:70.08px;height:10.36px"></div>
<div class="g" style="left:463px;top:70.08px;height:10.36px"></div>
<div class="g" style="left:475px;top:70.08px;height:10.36px"></div>
<div class="g" style="left:487px;top:70.08px;height:10.36px"></div>
<div class="g" style="left:500px;top:70.08px;height:10.36px"></div>
<div class="g" style="left:512px;top:70.08px;height:10.36px"></div>
<div class="g" style="left:524px;top:70.08px;height:10.36px"></div>
<div class="g" style="left:537px;top:70.08px;height:10.36px"></div>
<div class="g" style="left:549px;top:70.08px;height:10.36px"></div>
<div class="g" style="left:561px;top:70.08px;height:10.36px"></div>
<div class="l" style="left:451.20px;top:70.08px">                             ||  LD.32 M2,*(ADDR2)A4</div>
<div class="n" style="left:397.40px;top:80.14px;color:#808080">7839</div>
<div class="l" style="left:451.20px;top:80.14px">10005810:  dd01 5c93          SMPYF M4,M0,M1</div>
<div class="n" style="left:397.40px;top:90.19px;color:#808080">7840</div>
<div class="g" style="left:451px;top:90.19px;height:10.36px"></div>
<div class="g" style="left:463px;top:90.19px;height:10.36px"></div>
<div class="g" style="left:475px;top:90.19px;height:10.36px"></div>
<div class="g" style="left:487px;top:90.19px;height:10.36px"></div>
<div class="g" style="left:500px;top:90.19px;height:10.36px"></div>
<div class="g" style="left:512px;top:90.19px;height:10.36px"></div>
<div class="g" style="left:524px;top:90.19px;height:10.36px"></div>
<div class="g" style="left:537px;top:90.19px;height:10.36px"></div>
<div class="g" style="left:549px;top:90.19px;height:10.36px"></div>
<div class="g" style="left:561px;top:90.19px;height:10.36px"></div>
<div class="l" style="left:451.20px;top:90.19px">                             ||  SMPYF M2,M2,M3</div>
<div class="n" style="left:397.40px;top:100.25px;color:#808080">7841</div>
<div class="l" style="left:451.20px;top:100.25px">10005814:  bf80 4c54 0c82     QUADF TDM,M3,M4,M2</div>
<div class="n" style="left:397.40px;top:110.31px;color:#808080">7842</div>
<div class="g" style="left:451px;top:110.31px;height:10.36px"></div>
<div class="g" style="left:463px;top:110.31px;height:10.36px"></div>
<div class="g" style="left:475px;top:110.31px;height:10.36px"></div>
<div class="g" style="left:487px;top:110.31px;height:10.36px"></div>
<div class="g" style="left:500px;top:110.31px;height:10.36px"></div>
<div class="g" style="left:512px;top:110.31px;height:10.36px"></div>
<div class="g" style="left:524px;top:110.31px;height:10.36px"></div>
<div class="g" style="left:537px;top:110.31px;height:10.36px"></div>
<div class="g" style="left:549px;top:110.31px;height:10.36px"></div>
<div class="g" style="left:561px;top:110.31px;height:10.36px"></div>
<div class="l" style="left:451.20px;top:110.31px">                             ||  SADDF M1,M2,M4</div>
<div class="n" style="left:397.40px;top:120.37px;color:#808080">7843</div>
<div class="l" style="left:451.20px;top:120.37px">1000581a:  bcb6 bbc2 3bc4 0000 0004 0003</div>
<div class="n" style="left:397.40px;top:130.42px;color:#808080">7844</div>
<div class="g" style="left:451px;top:130.42px;height:10.36px"></div>
<div class="g" style="left:463px;top:130.42px;height:10.36px"></div>
<div class="g" style="left:475px;top:130.42px;height:10.36px"></div>
<div class="g" style="left:487px;top:130.42px;height:10.36px"></div>
<div class="g" style="left:500px;top:130.42px;height:10.36px"></div>
<div class="g" style="left:512px;top:130.42px;height:10.36px"></div>
<div class="g" style="left:524px;top:130.42px;height:10.36px"></div>
<div class="g" style="left:537px;top:130.42px;height:10.36px"></div>
<div class="g" style="left:549px;top:130.42px;height:10.36px"></div>
<div class="g" style="left:561px;top:130.42px;height:10.36px"></div>
<div class="l" style="left:451.20px;top:130.42px">                              MV D0,TDM</div>
<div class="n" style="left:397.40px;top:140.48px;color:#808080">7845</div>
<div class="g" style="left:451px;top:140.48px;height:10.36px"></div>
<div class="g" style="left:463px;top:140.48px;height:10.36px"></div>
<div class="g" style="left:475px;top:140.48px;height:10.36px"></div>
<div class="g" style="left:487px;top:140.48px;height:10.36px"></div>
<div class="g" style="left:500px;top:140.48px;height:10.36px"></div>
<div class="g" style="left:512px;top:140.48px;height:10.36px"></div>
<div class="g" style="left:524px;top:140.48px;height:10.36px"></div>
<div class="g" style="left:537px;top:140.48px;height:10.36px"></div>
<div class="g" style="left:549px;top:140.48px;height:10.36px"></div>
<div class="g" style="left:561px;top:140.48px;height:10.36px"></div>
<div class="l" style="left:451.20px;top:140.48px">                             ||  MV.S16   D2,#0x4</div>
<div class="n" style="left:397.40px;top:150.54px;color:#808080">7846</div>
<div class="g" style="left:451px;top:150.54px;height:10.36px"></div>
<div class="g" style="left:463px;top:150.54px;height:10.36px"></div>
<div class="g" style="left:475px;top:150.54px;height:10.36px"></div>
<div class="g" style="left:487px;top:150.54px;height:10.36px"></div>
<div class="g" style="left:500px;top:150.54px;height:10.36px"></div>
<div class="g" style="left:512px;top:150.54px;height:10.36px"></div>
<div class="g" style="left:524px;top:150.54px;height:10.36px"></div>
<div class="g" style="left:537px;top:150.54px;height:10.36px"></div>
<div class="g" style="left:549px;top:150.54px;height:10.36px"></div>
<div class="g" style="left:561px;top:150.54px;height:10.36px"></div>
<div class="l" style="left:451.20px;top:150.54px">                             ||  MV.S16   D4,#0x3</div>
<div class="n" style="left:397.40px;top:160.60px;color:#808080">7847</div>
<div class="l" style="left:451.20px;top:160.60px">10005826:  b9a0 a606 bf60 d488 7c51 0144 0008 00c0</div>
<div class="n" style="left:397.40px;top:170.66px;color:#808080">7848</div>
<div class="g" style="left:451px;top:170.66px;height:10.36px"></div>
<div class="g" style="left:463px;top:170.66px;height:10.36px"></div>
<div class="g" style="left:475px;top:170.66px;height:10.36px"></div>
<div class="g" style="left:487px;top:170.66px;height:10.36px"></div>
<div class="g" style="left:500px;top:170.66px;height:10.36px"></div>
<div class="g" style="left:512px;top:170.66px;height:10.36px"></div>
<div class="g" style="left:524px;top:170.66px;height:10.36px"></div>
<div class="g" style="left:537px;top:170.66px;height:10.36px"></div>
<div class="g" style="left:549px;top:170.66px;height:10.36px"></div>
<div class="g" style="left:561px;top:170.66px;height:10.36px"></div>
<div class="l" style="left:451.20px;top:170.66px">                              ST.32 *(ADDR1)(A4+#0x14),M0</div>
<div class="n" style="left:397.40px;top:180.71px;color:#808080">7849</div>
<div class="g" style="left:451px;top:180.71px;height:10.36px"></div>
<div class="g" style="left:463px;top:180.71px;height:10.36px"></div>
<div class="g" style="left:475px;top:180.71px;height:10.36px"></div>
<div class="g" style="left:487px;top:180.71px;height:10.36px"></div>
<div class="g" style="left:500px;top:180.71px;height:10.36px"></div>
<div class="g" style="left:512px;top:180.71px;height:10.36px"></div>
<div class="g" style="left:524px;top:180.71px;height:10.36px"></div>
<div class="g" style="left:537px;top:180.71px;height:10.36px"></div>
<div class="g" style="left:549px;top:180.71px;height:10.36px"></div>
<div class="g" style="left:561px;top:180.71px;height:10.36px"></div>
<div class="l" style="left:451.20px;top:180.71px">                             ||  CMP.U16  TDM0,D.LO,D0,#0x8</div>
<div class="n" style="left:397.40px;top:190.77px;color:#808080">7850</div>
<div class="g" style="left:451px;top:190.77px;height:10.36px"></div>
<div class="g" style="left:463px;top:190.77px;height:10.36px"></div>
<div class="g" style="left:475px;top:190.77px;height:10.36px"></div>
<div class="g" style="left:487px;top:190.77px;height:10.36px"></div>
<div class="g" style="left:500px;top:190.77px;height:10.36px"></div>
<div class="g" style="left:512px;top:190.77px;height:10.36px"></div>
<div class="g" style="left:524px;top:190.77px;height:10.36px"></div>
<div class="g" style="left:537px;top:190.77px;height:10.36px"></div>
<div class="g" style="left:549px;top:190.77px;height:10.36px"></div>
<div class="g" style="left:561px;top:190.77px;height:10.36px"></div>
<div class="l" style="left:451.20px;top:190.77px">                             ||  NEGF  M6,M0</div>
<div class="n" style="left:397.40px;top:200.83px;color:#808080">7851</div>
<div class="g" style="left:451px;top:200.83px;height:10.36px"></div>
<div class="g" style="left:463px;top:200.83px;height:10.36px"></div>
<div class="g" style="left:475px;top:200.83px;height:10.36px"></div>
<div class="g" style="left:487px;top:200.83px;height:10.36px"></div>
<div class="g" style="left:500px;top:200.83px;height:10.36px"></div>
<div class="g" style="left:512px;top:200.83px;height:10.36px"></div>
<div class="g" style="left:524px;top:200.83px;height:10.36px"></div>
<div class="g" style="left:537px;top:200.83px;height:10.36px"></div>
<div class="g" style="left:549px;top:200.83px;height:10.36px"></div>
<div class="g" style="left:561px;top:200.83px;height:10.36px"></div>
<div class="l" style="left:451.20px;top:200.83px">                             ||  SSUBF M2,M1,M0</div>
<div class="n" style="left:397.40px;top:210.89px;color:#808080">7852</div>
<div class="g" style="left:451px;top:210.89px;height:10.36px"></div>
<div class="g" style="left:463px;top:210.89px;height:10.36px"></div>
<div class="g" style="left:475px;top:210.89px;height:10.36px"></div>
<div class="g" style="left:487px;top:210.89px;height:10.36px"></div>
<div class="g" style="left:500px;top:210.89px;height:10.36px"></div>
<div class="g" style="left:512px;top:210.89px;height:10.36px"></div>
<div class="g" style="left:524px;top:210.89px;height:10.36px"></div>
<div class="g" style="left:537px;top:210.89px;height:10.36px"></div>
<div class="g" style="left:549px;top:210.89px;height:10.36px"></div>
<div class="g" style="left:561px;top:210.89px;height:10.36px"></div>
<div class="l" style="left:451.20px;top:210.89px">                             ||  ONE   D1</div>
<div class="n" style="left:397.40px;top:220.95px;color:#808080">7853</div>
<div class="l" style="left:451.20px;top:220.95px">10005836:  b9a1 bcca bf49 3c70 0184 0020 1420 0422</div>
<div class="n" style="left:397.40px;top:231.00px;color:#808080">7854</div>
<div class="g" style="left:451px;top:231.00px;height:10.36px"></div>
<div class="g" style="left:463px;top:231.00px;height:10.36px"></div>
<div class="g" style="left:475px;top:231.00px;height:10.36px"></div>
<div class="g" style="left:487px;top:231.00px;height:10.36px"></div>
<div class="g" style="left:500px;top:231.00px;height:10.36px"></div>
<div class="g" style="left:512px;top:231.00px;height:10.36px"></div>
<div class="g" style="left:524px;top:231.00px;height:10.36px"></div>
<div class="g" style="left:537px;top:231.00px;height:10.36px"></div>
<div class="g" style="left:549px;top:231.00px;height:10.36px"></div>
<div class="g" style="left:561px;top:231.00px;height:10.36px"></div>
<div class="l" style="left:451.20px;top:231.00px">                              ST.32 *(ADDR1)(A4+#0x18),M1</div>
<div class="n" style="left:397.40px;top:241.06px;color:#808080">7855</div>
<div class="g" style="left:451px;top:241.06px;height:10.36px"></div>
<div class="g" style="left:463px;top:241.06px;height:10.36px"></div>
<div class="g" style="left:475px;top:241.06px;height:10.36px"></div>
<div class="g" style="left:487px;top:241.06px;height:10.36px"></div>
<div class="g" style="left:500px;top:241.06px;height:10.36px"></div>
<div class="g" style="left:512px;top:241.06px;height:10.36px"></div>
<div class="g" style="left:524px;top:241.06px;height:10.36px"></div>
<div class="g" style="left:537px;top:241.06px;height:10.36px"></div>
<div class="g" style="left:549px;top:241.06px;height:10.36px"></div>
<div class="g" style="left:561px;top:241.06px;height:10.36px"></div>
<div class="l" style="left:451.20px;top:241.06px">                             ||  LSL   D0,D1,D0</div>
<div class="n" style="left:397.40px;top:251.12px;color:#808080">7856</div>
<div class="g" style="left:451px;top:251.12px;height:10.36px"></div>
<div class="g" style="left:463px;top:251.12px;height:10.36px"></div>
<div class="g" style="left:475px;top:251.12px;height:10.36px"></div>
<div class="g" style="left:487px;top:251.12px;height:10.36px"></div>
<div class="g" style="left:500px;top:251.12px;height:10.36px"></div>
<div class="g" style="left:512px;top:251.12px;height:10.36px"></div>
<div class="g" style="left:524px;top:251.12px;height:10.36px"></div>
<div class="g" style="left:537px;top:251.12px;height:10.36px"></div>
<div class="g" style="left:549px;top:251.12px;height:10.36px"></div>
<div class="g" style="left:561px;top:251.12px;height:10.36px"></div>
<div class="l" style="left:451.20px;top:251.12px">                             ||  ADDNEGF  M5,M1,M0</div>
<div class="n" style="left:397.40px;top:261.18px;color:#808080">7857</div>
<div class="g" style="left:451px;top:261.18px;height:10.36px"></div>
<div class="g" style="left:463px;top:261.18px;height:10.36px"></div>
<div class="g" style="left:475px;top:261.18px;height:10.36px"></div>
<div class="g" style="left:487px;top:261.18px;height:10.36px"></div>
<div class="g" style="left:500px;top:261.18px;height:10.36px"></div>
<div class="g" style="left:512px;top:261.18px;height:10.36px"></div>
<div class="g" style="left:524px;top:261.18px;height:10.36px"></div>
<div class="g" style="left:537px;top:261.18px;height:10.36px"></div>
<div class="g" style="left:549px;top:261.18px;height:10.36px"></div>
<div class="g" style="left:561px;top:261.18px;height:10.36px"></div>
<div class="l" style="left:451.20px;top:261.18px">                             ||  SELECT   TDM0,D1,D1,D2</div>
<div class="n" style="left:397.40px;top:271.24px;color:#808080">7858</div>
<div class="l" style="left:451.20px;top:271.24px">10005846:  bf60 bbe0 bbc2 6c30 00e1 0303 0006</div>
<div class="n" style="left:397.40px;top:281.30px;color:#808080">7859</div>
<div class="g" style="left:451px;top:281.30px;height:10.36px"></div>
<div class="g" style="left:463px;top:281.30px;height:10.36px"></div>
<div class="g" style="left:475px;top:281.30px;height:10.36px"></div>
<div class="g" style="left:487px;top:281.30px;height:10.36px"></div>
<div class="g" style="left:500px;top:281.30px;height:10.36px"></div>
<div class="g" style="left:512px;top:281.30px;height:10.36px"></div>
<div class="g" style="left:524px;top:281.30px;height:10.36px"></div>
<div class="g" style="left:537px;top:281.30px;height:10.36px"></div>
<div class="g" style="left:549px;top:281.30px;height:10.36px"></div>
<div class="g" style="left:561px;top:281.30px;height:10.36px"></div>
<div class="l" style="left:451.20px;top:281.30px">                              NEGF  M7,M1</div>
<div class="n" style="left:397.40px;top:291.35px;color:#808080">7860</div>
<div class="g" style="left:451px;top:291.35px;height:10.36px"></div>
<div class="g" style="left:463px;top:291.35px;height:10.36px"></div>
<div class="g" style="left:475px;top:291.35px;height:10.36px"></div>
<div class="g" style="left:487px;top:291.35px;height:10.36px"></div>
<div class="g" style="left:500px;top:291.35px;height:10.36px"></div>
<div class="g" style="left:512px;top:291.35px;height:10.36px"></div>
<div class="g" style="left:524px;top:291.35px;height:10.36px"></div>
<div class="g" style="left:537px;top:291.35px;height:10.36px"></div>
<div class="g" style="left:549px;top:291.35px;height:10.36px"></div>
<div class="g" style="left:561px;top:291.35px;height:10.36px"></div>
<div class="l" style="left:451.20px;top:291.35px">                             ||  AND.U16  D0,#0x303</div>
<div class="n" style="left:397.40px;top:301.41px;color:#808080">7861</div>
<div class="g" style="left:451px;top:301.41px;height:10.36px"></div>
<div class="g" style="left:463px;top:301.41px;height:10.36px"></div>
<div class="g" style="left:475px;top:301.41px;height:10.36px"></div>
<div class="g" style="left:487px;top:301.41px;height:10.36px"></div>
<div class="g" style="left:500px;top:301.41px;height:10.36px"></div>
<div class="g" style="left:512px;top:301.41px;height:10.36px"></div>
<div class="g" style="left:524px;top:301.41px;height:10.36px"></div>
<div class="g" style="left:537px;top:301.41px;height:10.36px"></div>
<div class="g" style="left:549px;top:301.41px;height:10.36px"></div>
<div class="g" style="left:561px;top:301.41px;height:10.36px"></div>
<div class="l" style="left:451.20px;top:301.41px">                             ||  MV.S16   D2,#0x6</div>
<div class="n" style="left:397.40px;top:311.47px;color:#808080">7862</div>
<div class="g" style="left:451px;top:311.47px;height:10.36px"></div>
<div class="g" style="left:463px;top:311.47px;height:10.36px"></div>
<div class="g" style="left:475px;top:311.47px;height:10.36px"></div>
<div class="g" style="left:487px;top:311.47px;height:10.36px"></div>
<div class="g" style="left:500px;top:311.47px;height:10.36px"></div>
<div class="g" style="left:512px;top:311.47px;height:10.36px"></div>
<div class="g" style="left:524px;top:311.47px;height:10.36px"></div>
<div class="g" style="left:537px;top:311.47px;height:10.36px"></div>
<div class="g" style="left:549px;top:311.47px;height:10.36px"></div>
<div class="g" style="left:561px;top:311.47px;height:10.36px"></div>
<div class="l" style="left:451.20px;top:311.47px">                             ||  MV D3,D0</div>
<div class="n" style="left:397.40px;top:321.53px;color:#808080">7863</div>
<div class="l" style="left:451.20px;top:321.53px">10005854:  bbe3 a40b bc70 d4c2 4d11 3c3c 0000 0882</div>
<div class="n" style="left:397.40px;top:331.58px;color:#808080">7864</div>
<div class="g" style="left:451px;top:331.58px;height:10.36px"></div>
<div class="g" style="left:463px;top:331.58px;height:10.36px"></div>
<div class="g" style="left:475px;top:331.58px;height:10.36px"></div>
<div class="g" style="left:487px;top:331.58px;height:10.36px"></div>
<div class="g" style="left:500px;top:331.58px;height:10.36px"></div>
<div class="g" style="left:512px;top:331.58px;height:10.36px"></div>
<div class="g" style="left:524px;top:331.58px;height:10.36px"></div>
<div class="g" style="left:537px;top:331.58px;height:10.36px"></div>
<div class="g" style="left:549px;top:331.58px;height:10.36px"></div>
<div class="g" style="left:561px;top:331.58px;height:10.36px"></div>
<div class="l" style="left:451.20px;top:331.58px">                              AND.U16  D3,#0x3c3c</div>
<div class="n" style="left:397.40px;top:341.64px;color:#808080">7865</div>
<div class="g" style="left:451px;top:341.64px;height:10.36px"></div>
<div class="g" style="left:463px;top:341.64px;height:10.36px"></div>
<div class="g" style="left:475px;top:341.64px;height:10.36px"></div>
<div class="g" style="left:487px;top:341.64px;height:10.36px"></div>
<div class="g" style="left:500px;top:341.64px;height:10.36px"></div>
<div class="g" style="left:512px;top:341.64px;height:10.36px"></div>
<div class="g" style="left:524px;top:341.64px;height:10.36px"></div>
<div class="g" style="left:537px;top:341.64px;height:10.36px"></div>
<div class="g" style="left:549px;top:341.64px;height:10.36px"></div>
<div class="g" style="left:561px;top:341.64px;height:10.36px"></div>
<div class="l" style="left:451.20px;top:341.64px">                             ||  CMP.S16  TDM1,D.NEQ,D0,#0x0</div>
<div class="n" style="left:397.40px;top:351.70px;color:#808080">7866</div>
<div class="g" style="left:451px;top:351.70px;height:10.36px"></div>
<div class="g" style="left:463px;top:351.70px;height:10.36px"></div>
<div class="g" style="left:475px;top:351.70px;height:10.36px"></div>
<div class="g" style="left:487px;top:351.70px;height:10.36px"></div>
<div class="g" style="left:500px;top:351.70px;height:10.36px"></div>
<div class="g" style="left:512px;top:351.70px;height:10.36px"></div>
<div class="g" style="left:524px;top:351.70px;height:10.36px"></div>
<div class="g" style="left:537px;top:351.70px;height:10.36px"></div>
<div class="g" style="left:549px;top:351.70px;height:10.36px"></div>
<div class="g" style="left:561px;top:351.70px;height:10.36px"></div>
<div class="l" style="left:451.20px;top:351.70px">                             ||  SELECT   TDM0,D2,D4,D2</div>
<div class="n" style="left:397.40px;top:361.76px;color:#808080">7867</div>
<div class="g" style="left:451px;top:361.76px;height:10.36px"></div>
<div class="g" style="left:463px;top:361.76px;height:10.36px"></div>
<div class="g" style="left:475px;top:361.76px;height:10.36px"></div>
<div class="g" style="left:487px;top:361.76px;height:10.36px"></div>
<div class="g" style="left:500px;top:361.76px;height:10.36px"></div>
<div class="g" style="left:512px;top:361.76px;height:10.36px"></div>
<div class="g" style="left:524px;top:361.76px;height:10.36px"></div>
<div class="g" style="left:537px;top:361.76px;height:10.36px"></div>
<div class="g" style="left:549px;top:361.76px;height:10.36px"></div>
<div class="g" style="left:561px;top:361.76px;height:10.36px"></div>
<div class="l" style="left:451.20px;top:361.76px">                             ||  SSUBF M3,M0,M2</div>
<div class="n" style="left:397.40px;top:371.82px;color:#808080">7868</div>
<div class="g" style="left:451px;top:371.82px;height:10.36px"></div>
<div class="g" style="left:463px;top:371.82px;height:10.36px"></div>
<div class="g" style="left:475px;top:371.82px;height:10.36px"></div>
<div class="g" style="left:487px;top:371.82px;height:10.36px"></div>
<div class="g" style="left:500px;top:371.82px;height:10.36px"></div>
<div class="g" style="left:512px;top:371.82px;height:10.36px"></div>
<div class="g" style="left:524px;top:371.82px;height:10.36px"></div>
<div class="g" style="left:537px;top:371.82px;height:10.36px"></div>
<div class="g" style="left:549px;top:371.82px;height:10.36px"></div>
<div class="g" style="left:561px;top:371.82px;height:10.36px"></div>
<div class="l" style="left:451.20px;top:371.82px">                             ||  SADDF M4,M2,M1</div>
<div class="n" style="left:397.40px;top:381.88px;color:#808080">7869</div>
<div class="l" style="left:451.20px;top:381.88px">10005864:  bf60 bbc0 a473 3f41 0102 0005 0000 0422</div>
<div class="n" style="left:397.40px;top:391.93px;color:#808080">7870</div>
<div class="g" style="left:451px;top:391.93px;height:10.36px"></div>
<div class="g" style="left:463px;top:391.93px;height:10.36px"></div>
<div class="g" style="left:475px;top:391.93px;height:10.36px"></div>
<div class="g" style="left:487px;top:391.93px;height:10.36px"></div>
<div class="g" style="left:500px;top:391.93px;height:10.36px"></div>
<div class="g" style="left:512px;top:391.93px;height:10.36px"></div>
<div class="g" style="left:524px;top:391.93px;height:10.36px"></div>
<div class="g" style="left:537px;top:391.93px;height:10.36px"></div>
<div class="g" style="left:549px;top:391.93px;height:10.36px"></div>
<div class="g" style="left:561px;top:391.93px;height:10.36px"></div>
<div class="l" style="left:451.20px;top:391.93px">                              NEGF  M8,M2</div>
<div class="n" style="left:397.40px;top:401.99px;color:#808080">7871</div>
<div class="g" style="left:451px;top:401.99px;height:10.36px"></div>
<div class="g" style="left:463px;top:401.99px;height:10.36px"></div>
<div class="g" style="left:475px;top:401.99px;height:10.36px"></div>
<div class="g" style="left:487px;top:401.99px;height:10.36px"></div>
<div class="g" style="left:500px;top:401.99px;height:10.36px"></div>
<div class="g" style="left:512px;top:401.99px;height:10.36px"></div>
<div class="g" style="left:524px;top:401.99px;height:10.36px"></div>
<div class="g" style="left:537px;top:401.99px;height:10.36px"></div>
<div class="g" style="left:549px;top:401.99px;height:10.36px"></div>
<div class="g" style="left:561px;top:401.99px;height:10.36px"></div>
<div class="l" style="left:451.20px;top:401.99px">                             ||  MV.S16   D0,#0x5</div>
<div class="n" style="left:397.40px;top:412.05px;color:#808080">7872</div>
<div class="g" style="left:451px;top:412.05px;height:10.36px"></div>
<div class="g" style="left:463px;top:412.05px;height:10.36px"></div>
<div class="g" style="left:475px;top:412.05px;height:10.36px"></div>
<div class="g" style="left:487px;top:412.05px;height:10.36px"></div>
<div class="g" style="left:500px;top:412.05px;height:10.36px"></div>
<div class="g" style="left:512px;top:412.05px;height:10.36px"></div>
<div class="g" style="left:524px;top:412.05px;height:10.36px"></div>
<div class="g" style="left:537px;top:412.05px;height:10.36px"></div>
<div class="g" style="left:549px;top:412.05px;height:10.36px"></div>
<div class="g" style="left:561px;top:412.05px;height:10.36px"></div>
<div class="l" style="left:451.20px;top:412.05px">                             ||  CMP.S16  TDM2,D.NEQ,D3,#0x0</div>
<div class="n" style="left:397.40px;top:422.11px;color:#808080">7873</div>
<div class="g" style="left:451px;top:422.11px;height:10.36px"></div>
<div class="g" style="left:463px;top:422.11px;height:10.36px"></div>
<div class="g" style="left:475px;top:422.11px;height:10.36px"></div>
<div class="g" style="left:487px;top:422.11px;height:10.36px"></div>
<div class="g" style="left:500px;top:422.11px;height:10.36px"></div>
<div class="g" style="left:512px;top:422.11px;height:10.36px"></div>
<div class="g" style="left:524px;top:422.11px;height:10.36px"></div>
<div class="g" style="left:537px;top:422.11px;height:10.36px"></div>
<div class="g" style="left:549px;top:422.11px;height:10.36px"></div>
<div class="g" style="left:561px;top:422.11px;height:10.36px"></div>
<div class="l" style="left:451.20px;top:422.11px">                             ||  SELECT   TDM1,M1,M1,M2</div>
<div class="n" style="left:397.40px;top:432.16px;color:#808080">7874</div>
<div class="l" style="left:451.20px;top:432.16px">10005874:  b9a2 bbc3 bf41 3f42 01c4 0002 14e5 0881</div>
<div class="n" style="left:397.40px;top:442.22px;color:#808080">7875</div>
<div class="g" style="left:451px;top:442.22px;height:10.36px"></div>
<div class="g" style="left:463px;top:442.22px;height:10.36px"></div>
<div class="g" style="left:475px;top:442.22px;height:10.36px"></div>
<div class="g" style="left:487px;top:442.22px;height:10.36px"></div>
<div class="g" style="left:500px;top:442.22px;height:10.36px"></div>
<div class="g" style="left:512px;top:442.22px;height:10.36px"></div>
<div class="g" style="left:524px;top:442.22px;height:10.36px"></div>
<div class="g" style="left:537px;top:442.22px;height:10.36px"></div>
<div class="g" style="left:549px;top:442.22px;height:10.36px"></div>
<div class="g" style="left:561px;top:442.22px;height:10.36px"></div>
<div class="l" style="left:451.20px;top:442.22px">                              ST.32 *(ADDR1)(A4+#0x1c),M2</div>
<div class="n" style="left:397.40px;top:452.28px;color:#808080">7876</div>
<div class="g" style="left:451px;top:452.28px;height:10.36px"></div>
<div class="g" style="left:463px;top:452.28px;height:10.36px"></div>
<div class="g" style="left:475px;top:452.28px;height:10.36px"></div>
<div class="g" style="left:487px;top:452.28px;height:10.36px"></div>
<div class="g" style="left:500px;top:452.28px;height:10.36px"></div>
<div class="g" style="left:512px;top:452.28px;height:10.36px"></div>
<div class="g" style="left:524px;top:452.28px;height:10.36px"></div>
<div class="g" style="left:537px;top:452.28px;height:10.36px"></div>
<div class="g" style="left:549px;top:452.28px;height:10.36px"></div>
<div class="g" style="left:561px;top:452.28px;height:10.36px"></div>
<div class="l" style="left:451.20px;top:452.28px">                             ||  MV.S16   D3,#0x2</div>
<div class="n" style="left:397.40px;top:462.34px;color:#808080">7877</div>
<div class="g" style="left:451px;top:462.34px;height:10.36px"></div>
<div class="g" style="left:463px;top:462.34px;height:10.36px"></div>
<div class="g" style="left:475px;top:462.34px;height:10.36px"></div>
<div class="g" style="left:487px;top:462.34px;height:10.36px"></div>
<div class="g" style="left:500px;top:462.34px;height:10.36px"></div>
<div class="g" style="left:512px;top:462.34px;height:10.36px"></div>
<div class="g" style="left:524px;top:462.34px;height:10.36px"></div>
<div class="g" style="left:537px;top:462.34px;height:10.36px"></div>
<div class="g" style="left:549px;top:462.34px;height:10.36px"></div>
<div class="g" style="left:561px;top:462.34px;height:10.36px"></div>
<div class="l" style="left:451.20px;top:462.34px">                             ||  SELECT   TDM1,M5,M7,M5</div>
<div class="n" style="left:397.40px;top:472.40px;color:#808080">7878</div>
<div class="g" style="left:451px;top:472.40px;height:10.36px"></div>
<div class="g" style="left:463px;top:472.40px;height:10.36px"></div>
<div class="g" style="left:475px;top:472.40px;height:10.36px"></div>
<div class="g" style="left:487px;top:472.40px;height:10.36px"></div>
<div class="g" style="left:500px;top:472.40px;height:10.36px"></div>
<div class="g" style="left:512px;top:472.40px;height:10.36px"></div>
<div class="g" style="left:524px;top:472.40px;height:10.36px"></div>
<div class="g" style="left:537px;top:472.40px;height:10.36px"></div>
<div class="g" style="left:549px;top:472.40px;height:10.36px"></div>
<div class="g" style="left:561px;top:472.40px;height:10.36px"></div>
<div class="l" style="left:451.20px;top:472.40px">                             ||  SELECT   TDM2,M2,M4,M1</div>
<div class="n" style="left:397.40px;top:482.45px;color:#808080">7879</div>
<div class="l" style="left:451.20px;top:482.45px">10005884:  bf41 bf42 b9a2 7a09 0c68 04c5 0084</div>
<div class="n" style="left:397.40px;top:492.51px;color:#808080">7880</div>
<div class="g" style="left:451px;top:492.51px;height:10.36px"></div>
<div class="g" style="left:463px;top:492.51px;height:10.36px"></div>
<div class="g" style="left:475px;top:492.51px;height:10.36px"></div>
<div class="g" style="left:487px;top:492.51px;height:10.36px"></div>
<div class="g" style="left:500px;top:492.51px;height:10.36px"></div>
<div class="g" style="left:512px;top:492.51px;height:10.36px"></div>
<div class="g" style="left:524px;top:492.51px;height:10.36px"></div>
<div class="g" style="left:537px;top:492.51px;height:10.36px"></div>
<div class="g" style="left:549px;top:492.51px;height:10.36px"></div>
<div class="g" style="left:561px;top:492.51px;height:10.36px"></div>
<div class="l" style="left:451.20px;top:492.51px">                              SELECT   TDM1,M3,M3,M8</div>
<div class="n" style="left:397.40px;top:502.57px;color:#808080">7881</div>
<div class="g" style="left:451px;top:502.57px;height:10.36px"></div>
<div class="g" style="left:463px;top:502.57px;height:10.36px"></div>
<div class="g" style="left:475px;top:502.57px;height:10.36px"></div>
<div class="g" style="left:487px;top:502.57px;height:10.36px"></div>
<div class="g" style="left:500px;top:502.57px;height:10.36px"></div>
<div class="g" style="left:512px;top:502.57px;height:10.36px"></div>
<div class="g" style="left:524px;top:502.57px;height:10.36px"></div>
<div class="g" style="left:537px;top:502.57px;height:10.36px"></div>
<div class="g" style="left:549px;top:502.57px;height:10.36px"></div>
<div class="g" style="left:561px;top:502.57px;height:10.36px"></div>
<div class="l" style="left:451.20px;top:502.57px">                             ||  SELECT   TDM2,M1,M6,M5</div>
<div class="n" style="left:397.40px;top:512.63px;color:#808080">7882</div>
<div class="g" style="left:451px;top:512.63px;height:10.36px"></div>
<div class="g" style="left:463px;top:512.63px;height:10.36px"></div>
<div class="g" style="left:475px;top:512.63px;height:10.36px"></div>
<div class="g" style="left:487px;top:512.63px;height:10.36px"></div>
<div class="g" style="left:500px;top:512.63px;height:10.36px"></div>
<div class="g" style="left:512px;top:512.63px;height:10.36px"></div>
<div class="g" style="left:524px;top:512.63px;height:10.36px"></div>
<div class="g" style="left:537px;top:512.63px;height:10.36px"></div>
<div class="g" style="left:549px;top:512.63px;height:10.36px"></div>
<div class="g" style="left:561px;top:512.63px;height:10.36px"></div>
<div class="l" style="left:451.20px;top:512.63px">                             ||  ST.32 *(ADDR1)(A4+#0x8),M2</div>
<div class="n" style="left:397.40px;top:522.69px;color:#808080">7883</div>
<div class="g" style="left:451px;top:522.69px;height:10.36px"></div>
<div class="g" style="left:463px;top:522.69px;height:10.36px"></div>
<div class="g" style="left:475px;top:522.69px;height:10.36px"></div>
<div class="g" style="left:487px;top:522.69px;height:10.36px"></div>
<div class="g" style="left:500px;top:522.69px;height:10.36px"></div>
<div class="g" style="left:512px;top:522.69px;height:10.36px"></div>
<div class="g" style="left:524px;top:522.69px;height:10.36px"></div>
<div class="g" style="left:537px;top:522.69px;height:10.36px"></div>
<div class="g" style="left:549px;top:522.69px;height:10.36px"></div>
<div class="g" style="left:561px;top:522.69px;height:10.36px"></div>
<div class="l" style="left:451.20px;top:522.69px">                             ||  RETD</div>
<div class="n" style="left:397.40px;top:532.75px;color:#808080">7884</div>
<div class="l" style="left:451.20px;top:532.75px">10005892:  bc70 bc71 bf42 39a1 0060 0422 0003 0104</div>
</body></html>
